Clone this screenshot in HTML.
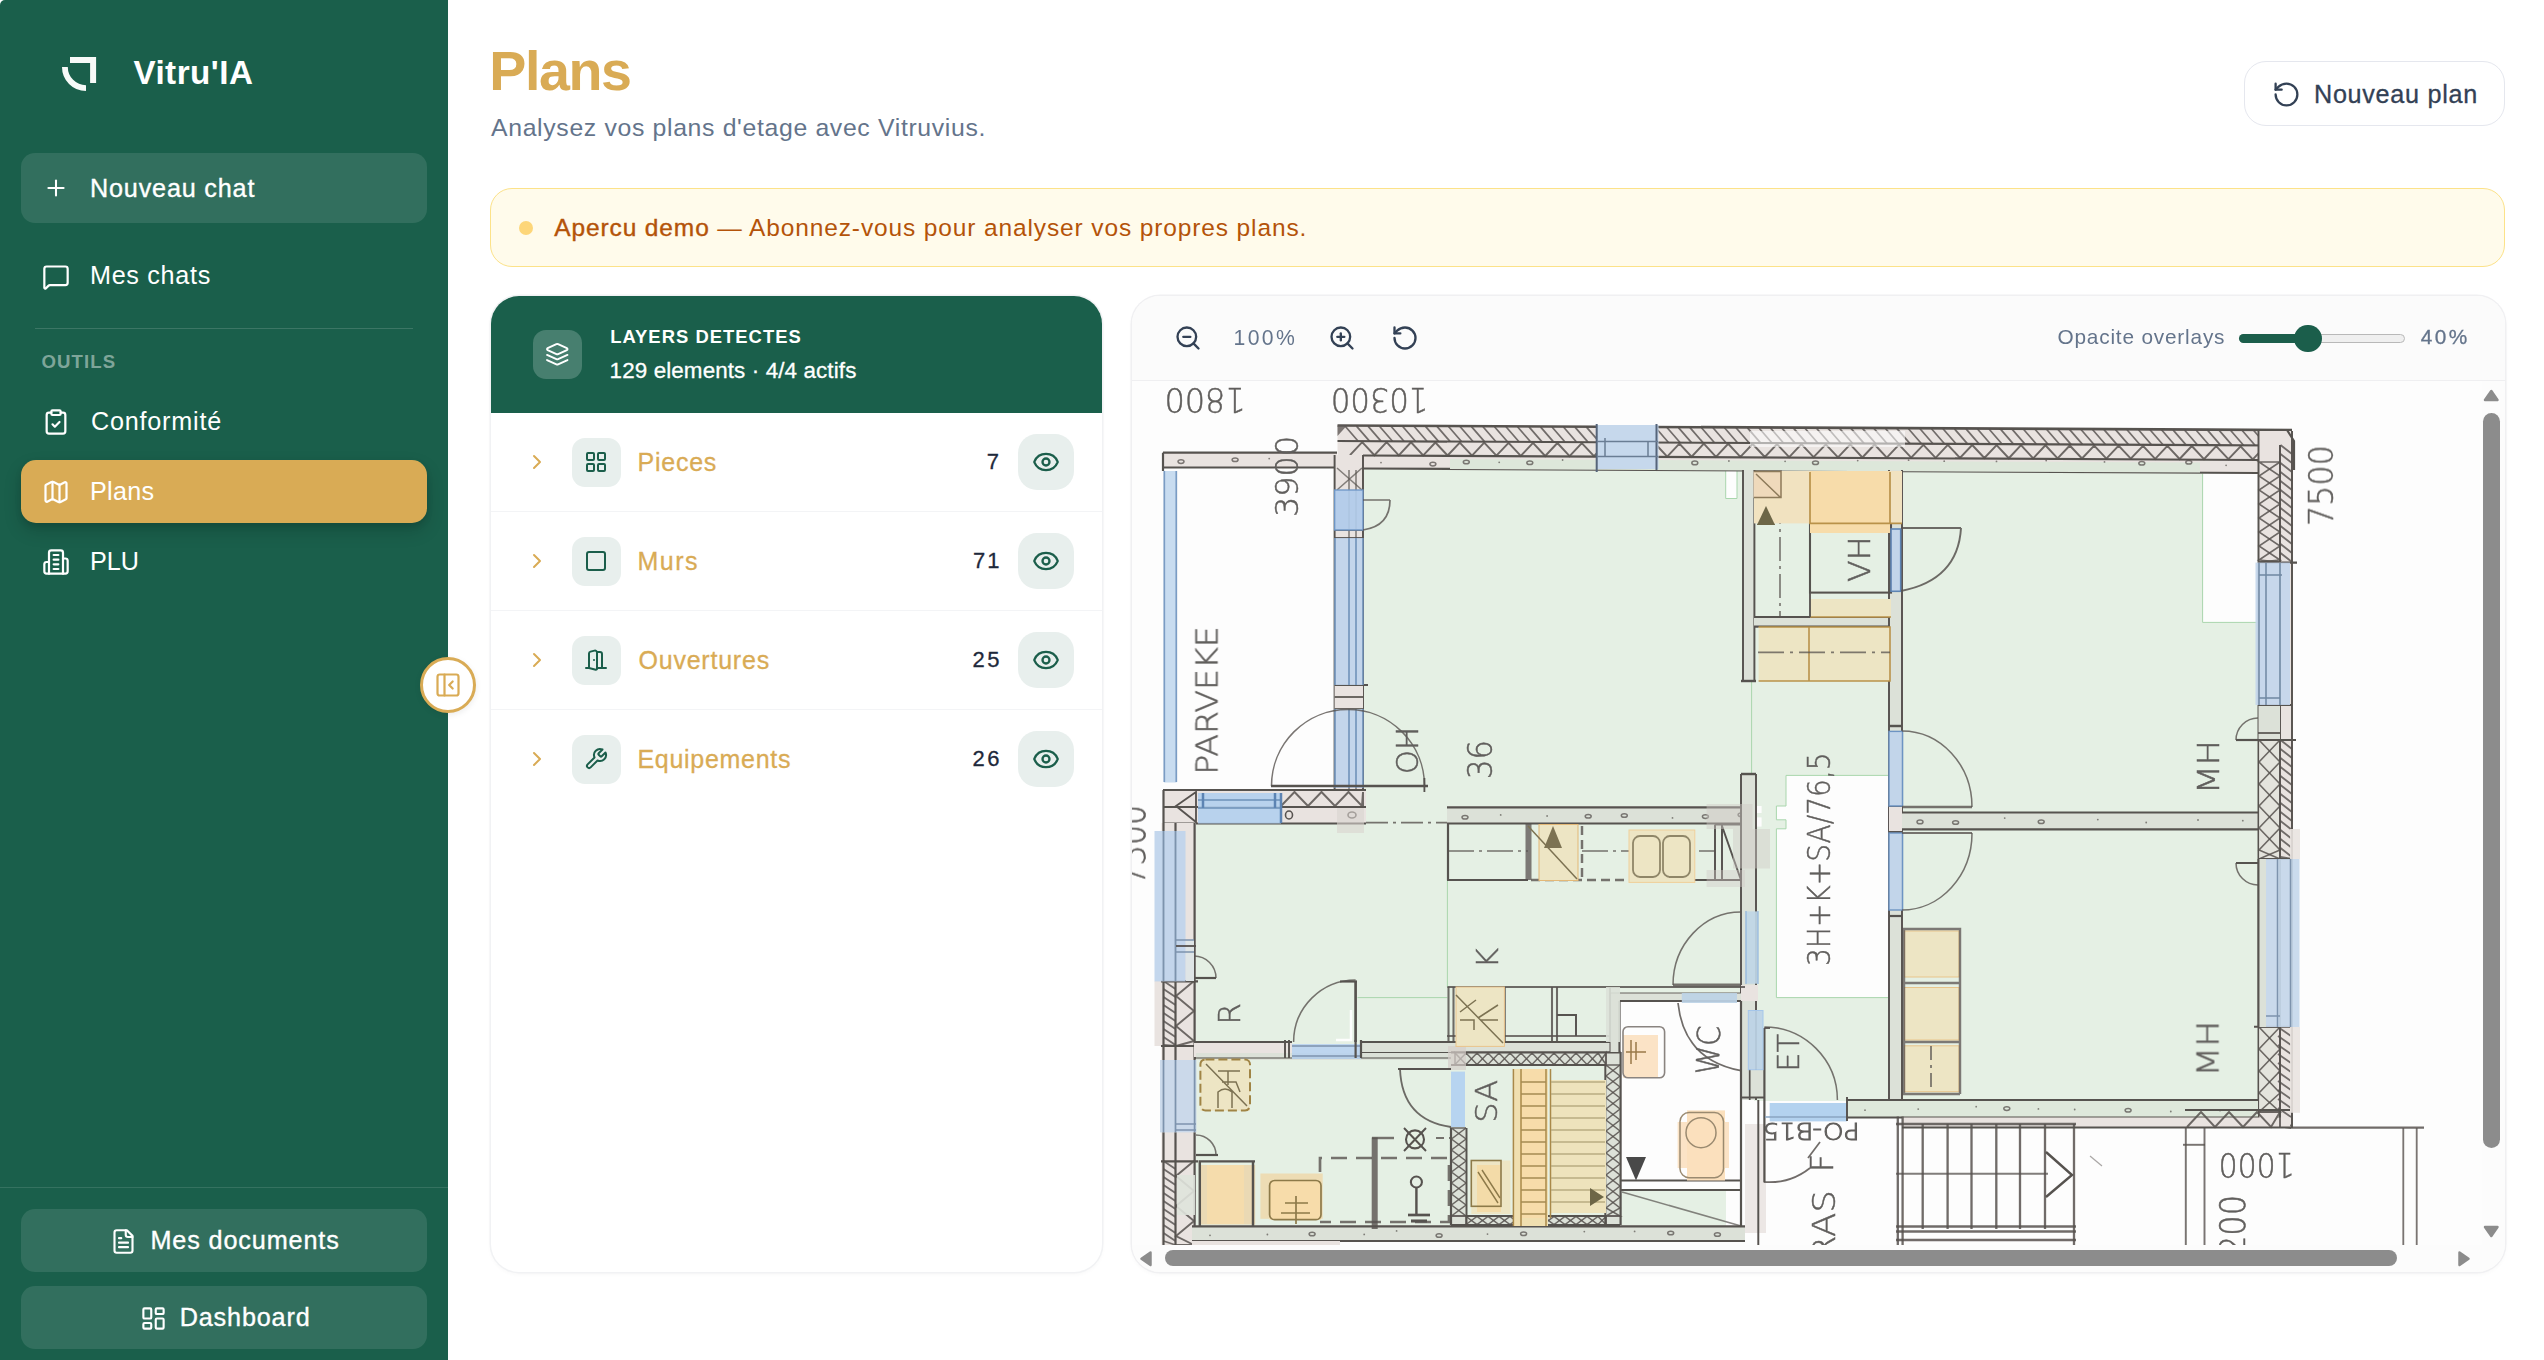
<!DOCTYPE html>
<html lang="fr"><head><meta charset="utf-8"><title>Vitru'IA - Plans</title>
<style>
*{box-sizing:border-box;margin:0;padding:0}
html,body{width:2544px;height:1360px;overflow:hidden;background:#fff}
@media (max-width:1500px){html{zoom:.5}}
body{position:relative;font-family:"Liberation Sans",sans-serif;-webkit-font-smoothing:antialiased}
.abs,.t,.ic,aside,main,section,header,nav,button,div.b{position:absolute}
.t{white-space:pre;display:block}
button{border:0;background:none;font:inherit;color:inherit}
aside{left:0;top:0;width:448px;height:1360px;background:#1a5f4b;border-top-left-radius:5px}
.sbtn{left:21px;width:406px;border-radius:14px;background:rgba(255,255,255,.105)}
.hr{background:rgba(255,255,255,.15);height:1.5px}
.act{left:21px;top:460px;width:406px;height:63px;border-radius:15px;background:#d9ab55;box-shadow:0 8px 18px rgba(0,0,0,.16),0 3px 6px rgba(0,0,0,.10)}
.coll{left:420px;top:657px;width:56px;height:56px;border-radius:50%;background:#fff;border:3px solid #d9ab55;box-shadow:0 2px 6px rgba(0,0,0,.08)}
.np{left:2244px;top:61px;width:261px;height:65px;border-radius:22px;border:1.5px solid #e5e7ee;background:#fff}
.banner{left:490px;top:188px;width:2015px;height:79px;border-radius:22px;border:1.6px solid #fce289;background:#fffbeb}
.dot{left:519px;top:221px;width:14px;height:14px;border-radius:50%;background:#fdd679}
.lp{left:490.5px;top:295.5px;width:611.5px;height:976px;border-radius:28px;background:#fff;box-shadow:0 0 0 1.5px #f1f2f4,0 2px 5px rgba(0,0,0,.04);overflow:hidden}
.lph{left:0;top:0;width:612px;height:117.5px;background:#1a5f4b}
.ibox{width:49px;height:49px;border-radius:13px}
.row{left:0;width:612px;height:99px;border-bottom:1.5px solid #f3f4f6}
.eyeb{width:56px;height:56px;border-radius:19px;background:#e8efed}
.rp{left:1132px;top:295.5px;width:1372.5px;height:976px;border-radius:28px;background:#fcfcfc;box-shadow:0 0 0 1.5px #f0f0f2,0 2px 5px rgba(0,0,0,.04);overflow:hidden}
.tb{left:0;top:0;width:1373px;height:85.5px;border-bottom:1.5px solid #efeff1;background:#fbfbfb}
</style></head><body>

<aside>
<svg class="ic" style="left:56px;top:50px" width="48" height="48" viewBox="56 50 48 48"><path d="M70 60 H93.1 V83" fill="none" stroke="#f7faf8" stroke-width="6"/><path d="M64.9 67 A21.1 21.1 0 0 0 86 88.1" fill="none" stroke="#f7faf8" stroke-width="5.8"/></svg>
<div class="b sbtn" style="top:153px;height:70px"></div>
<svg class="ic" style="left:43px;top:175px" width="26" height="26" viewBox="0 0 24 24" fill="none" stroke="#fff" stroke-width="1.9" stroke-linecap="round" stroke-linejoin="round" ><path d="M5 12h14"/><path d="M12 5v14"/></svg>
<div class="b hr" style="left:35px;top:327.5px;width:378px"></div>
<svg class="ic" style="left:42px;top:262.7px" width="28" height="28" viewBox="0 0 24 24" fill="none" stroke="#fff" stroke-width="1.9" stroke-linecap="round" stroke-linejoin="round" ><path d="M22 17a2 2 0 0 1-2 2H6.828a2 2 0 0 0-1.414.586l-2.202 2.202A.71.71 0 0 1 2 21.286V5a2 2 0 0 1 2-2h16a2 2 0 0 1 2 2z"/></svg>
<svg class="ic" style="left:42px;top:408px" width="28" height="28" viewBox="0 0 24 24" fill="none" stroke="#fff" stroke-width="1.9" stroke-linecap="round" stroke-linejoin="round" ><rect width="8" height="4" x="8" y="2" rx="1" ry="1"/><path d="M16 4h2a2 2 0 0 1 2 2v14a2 2 0 0 1-2 2H6a2 2 0 0 1-2-2V6a2 2 0 0 1 2-2h2"/><path d="m9 14 2 2 4-4"/></svg>
<div class="b act"></div>
<svg class="ic" style="left:42px;top:478px" width="28" height="28" viewBox="0 0 24 24" fill="none" stroke="#fff" stroke-width="1.9" stroke-linecap="round" stroke-linejoin="round" ><path d="M14.106 5.553a2 2 0 0 0 1.788 0l3.659-1.83A1 1 0 0 1 21 4.619v12.764a1 1 0 0 1-.553.894l-4.553 2.277a2 2 0 0 1-1.788 0l-4.212-2.106a2 2 0 0 0-1.788 0l-3.659 1.83A1 1 0 0 1 3 19.381V6.618a1 1 0 0 1 .553-.894l4.553-2.277a2 2 0 0 1 1.788 0z"/><path d="M15 5.764v15"/><path d="M9 3.236v15"/></svg>
<svg class="ic" style="left:42px;top:548px" width="28" height="28" viewBox="0 0 24 24" fill="none" stroke="#fff" stroke-width="1.9" stroke-linecap="round" stroke-linejoin="round" ><path d="M6 22V4a2 2 0 0 1 2-2h8a2 2 0 0 1 2 2v18Z"/><path d="M6 12H4a2 2 0 0 0-2 2v6a2 2 0 0 0 2 2h2"/><path d="M18 9h2a2 2 0 0 1 2 2v9a2 2 0 0 1-2 2h-2"/><path d="M10 6h4"/><path d="M10 10h4"/><path d="M10 14h4"/><path d="M10 18h4"/></svg>
<div class="b hr" style="left:0;top:1186.5px;width:448px;background:rgba(255,255,255,.12)"></div>
<div class="b sbtn" style="top:1209px;height:63px"></div>
<div class="b sbtn" style="top:1286px;height:63px"></div>
<svg class="ic" style="left:109.5px;top:1227.5px" width="27" height="27" viewBox="0 0 24 24" fill="none" stroke="#fff" stroke-width="1.9" stroke-linecap="round" stroke-linejoin="round" ><path d="M15 2H6a2 2 0 0 0-2 2v16a2 2 0 0 0 2 2h12a2 2 0 0 0 2-2V7Z"/><path d="M14 2v4a2 2 0 0 0 2 2h4"/><path d="M10 9H8"/><path d="M16 13H8"/><path d="M16 17H8"/></svg>
<svg class="ic" style="left:139.5px;top:1304.5px" width="27" height="27" viewBox="0 0 24 24" fill="none" stroke="#fff" stroke-width="1.9" stroke-linecap="round" stroke-linejoin="round" ><rect width="7" height="9" x="3" y="3" rx="1"/><rect width="7" height="5" x="14" y="3" rx="1"/><rect width="7" height="9" x="14" y="12" rx="1"/><rect width="7" height="5" x="3" y="16" rx="1"/></svg>
<span class="t" style='left:133.40px;top:55.80px;font:700 33.2px/1 "Liberation Sans", sans-serif;letter-spacing:0.486px;color:#fff;'>Vitru'IA</span>
<span class="t" style='left:90.00px;top:175.87px;font:400 25.2px/1 "Liberation Sans", sans-serif;letter-spacing:0.818px;color:#fff;-webkit-text-stroke:.35px #fff;'>Nouveau chat</span>
<span class="t" style='left:90.00px;top:262.97px;font:400 25.2px/1 "Liberation Sans", sans-serif;letter-spacing:0.688px;color:#fff;'>Mes chats</span>
<span class="t" style='left:41.50px;top:353.46px;font:700 18.6px/1 "Liberation Sans", sans-serif;letter-spacing:1.100px;color:rgba(255,255,255,.45);'>OUTILS</span>
<span class="t" style='left:91.00px;top:408.67px;font:400 25.2px/1 "Liberation Sans", sans-serif;letter-spacing:0.778px;color:#fff;'>Conformité</span>
<span class="t" style='left:90.00px;top:478.67px;font:400 25.2px/1 "Liberation Sans", sans-serif;letter-spacing:0.250px;color:#fff;'>Plans</span>
<span class="t" style='left:90.00px;top:548.67px;font:400 25.2px/1 "Liberation Sans", sans-serif;letter-spacing:0.000px;color:#fff;'>PLU</span>
<span class="t" style='left:150.50px;top:1227.97px;font:400 25.2px/1 "Liberation Sans", sans-serif;letter-spacing:0.875px;color:#fff;-webkit-text-stroke:.35px #fff;'>Mes documents</span>
<span class="t" style='left:179.70px;top:1304.67px;font:400 25.2px/1 "Liberation Sans", sans-serif;letter-spacing:0.850px;color:#fff;-webkit-text-stroke:.35px #fff;'>Dashboard</span>
</aside>
<div class="b coll"></div>
<svg class="ic" style="left:433.9px;top:670.5px" width="28" height="28" viewBox="0 0 24 24" fill="none" stroke="#d9ab55" stroke-width="1.9" stroke-linecap="round" stroke-linejoin="round" ><rect width="18" height="18" x="3" y="3" rx="2"/><path d="M9 3v18"/><path d="m16 15-3-3 3-3"/></svg>
<main>
<div class="b np"></div>
<svg class="ic" style="left:2272.3px;top:79.8px" width="29" height="29" viewBox="0 0 24 24" fill="none" stroke="#334155" stroke-width="1.9" stroke-linecap="round" stroke-linejoin="round" ><path d="M3 12a9 9 0 1 0 9-9 9.75 9.75 0 0 0-6.74 2.74L3 8"/><path d="M3 3v5h5"/></svg>
<div class="b banner"></div><div class="b dot"></div>
<section class="lp"><header class="lph"></header>
<div class="b ibox" style="left:42px;top:34.4px;background:rgba(255,255,255,.2)"></div>
<svg class="ic" style="left:54.2px;top:46.6px" width="24.5" height="24.5" viewBox="0 0 24 24" fill="none" stroke="#fff" stroke-width="1.9" stroke-linecap="round" stroke-linejoin="round" ><path d="m12.83 2.18a2 2 0 0 0-1.66 0L2.6 6.08a1 1 0 0 0 0 1.83l8.58 3.91a2 2 0 0 0 1.66 0l8.58-3.9a1 1 0 0 0 0-1.83Z"/><path d="m22 17.65-9.17 4.16a2 2 0 0 1-1.66 0L2 17.65"/><path d="m22 12.65-9.17 4.16a2 2 0 0 1-1.66 0L2 12.65"/></svg>
<div class="b row" style="top:117.1px"></div>
<svg class="ic" style="left:34.5px;top:154.5px" width="24" height="24" viewBox="0 0 24 24" fill="none" stroke="#d9ab55" stroke-width="2" stroke-linecap="round" stroke-linejoin="round" ><path d="m9 18 6-6-6-6"/></svg>
<div class="b ibox" style="left:81.7px;top:142.4px;background:#e8efed"></div>
<svg class="ic" style="left:93.8px;top:154.8px" width="24" height="24" viewBox="0 0 24 24" fill="none" stroke="#1b5e4b" stroke-width="2" stroke-linecap="round" stroke-linejoin="round" ><rect width="7" height="7" x="3" y="3" rx="1"/><rect width="7" height="7" x="14" y="3" rx="1"/><rect width="7" height="7" x="14" y="14" rx="1"/><rect width="7" height="7" x="3" y="14" rx="1"/></svg>
<div class="b eyeb" style="left:527.5px;top:138.5px"></div>
<svg class="ic" style="left:541.5px;top:152.5px" width="28" height="28" viewBox="0 0 24 24" fill="none" stroke="#1b5e4b" stroke-width="2" stroke-linecap="round" stroke-linejoin="round" ><path d="M2.062 12.348a1 1 0 0 1 0-.696 10.75 10.75 0 0 1 19.876 0 1 1 0 0 1 0 .696 10.75 10.75 0 0 1-19.876 0"/><circle cx="12" cy="12" r="3"/></svg>
<div class="b row" style="top:216.1px"></div>
<svg class="ic" style="left:34.5px;top:253.5px" width="24" height="24" viewBox="0 0 24 24" fill="none" stroke="#d9ab55" stroke-width="2" stroke-linecap="round" stroke-linejoin="round" ><path d="m9 18 6-6-6-6"/></svg>
<div class="b ibox" style="left:81.7px;top:241.4px;background:#e8efed"></div>
<svg class="ic" style="left:93.8px;top:253.8px" width="24" height="24" viewBox="0 0 24 24" fill="none" stroke="#1b5e4b" stroke-width="2" stroke-linecap="round" stroke-linejoin="round" ><rect width="18" height="18" x="3" y="3" rx="2"/></svg>
<div class="b eyeb" style="left:527.5px;top:237.5px"></div>
<svg class="ic" style="left:541.5px;top:251.5px" width="28" height="28" viewBox="0 0 24 24" fill="none" stroke="#1b5e4b" stroke-width="2" stroke-linecap="round" stroke-linejoin="round" ><path d="M2.062 12.348a1 1 0 0 1 0-.696 10.75 10.75 0 0 1 19.876 0 1 1 0 0 1 0 .696 10.75 10.75 0 0 1-19.876 0"/><circle cx="12" cy="12" r="3"/></svg>
<div class="b row" style="top:315.1px"></div>
<svg class="ic" style="left:34.5px;top:352.5px" width="24" height="24" viewBox="0 0 24 24" fill="none" stroke="#d9ab55" stroke-width="2" stroke-linecap="round" stroke-linejoin="round" ><path d="m9 18 6-6-6-6"/></svg>
<div class="b ibox" style="left:81.7px;top:340.4px;background:#e8efed"></div>
<svg class="ic" style="left:93.8px;top:352.8px" width="24" height="24" viewBox="0 0 24 24" fill="none" stroke="#1b5e4b" stroke-width="2" stroke-linecap="round" stroke-linejoin="round" ><path d="M13 4h3a2 2 0 0 1 2 2v14"/><path d="M2 20h3"/><path d="M13 20h9"/><path d="M10 12v.01"/><path d="M13 4.562v16.157a1 1 0 0 1-1.242.97L5 20V5.562a2 2 0 0 1 1.515-1.94l4-1A2 2 0 0 1 13 4.561Z"/></svg>
<div class="b eyeb" style="left:527.5px;top:336.5px"></div>
<svg class="ic" style="left:541.5px;top:350.5px" width="28" height="28" viewBox="0 0 24 24" fill="none" stroke="#1b5e4b" stroke-width="2" stroke-linecap="round" stroke-linejoin="round" ><path d="M2.062 12.348a1 1 0 0 1 0-.696 10.75 10.75 0 0 1 19.876 0 1 1 0 0 1 0 .696 10.75 10.75 0 0 1-19.876 0"/><circle cx="12" cy="12" r="3"/></svg>
<div class="b row" style="top:414.1px;border:0"></div>
<svg class="ic" style="left:34.5px;top:451.5px" width="24" height="24" viewBox="0 0 24 24" fill="none" stroke="#d9ab55" stroke-width="2" stroke-linecap="round" stroke-linejoin="round" ><path d="m9 18 6-6-6-6"/></svg>
<div class="b ibox" style="left:81.7px;top:439.4px;background:#e8efed"></div>
<svg class="ic" style="left:93.8px;top:451.8px" width="24" height="24" viewBox="0 0 24 24" fill="none" stroke="#1b5e4b" stroke-width="2" stroke-linecap="round" stroke-linejoin="round" ><path d="M14.7 6.3a1 1 0 0 0 0 1.4l1.6 1.6a1 1 0 0 0 1.4 0l3.77-3.77a6 6 0 0 1-7.94 7.94l-6.91 6.91a2.12 2.12 0 0 1-3-3l6.91-6.91a6 6 0 0 1 7.94-7.94l-3.76 3.76z"/></svg>
<div class="b eyeb" style="left:527.5px;top:435.5px"></div>
<svg class="ic" style="left:541.5px;top:449.5px" width="28" height="28" viewBox="0 0 24 24" fill="none" stroke="#1b5e4b" stroke-width="2" stroke-linecap="round" stroke-linejoin="round" ><path d="M2.062 12.348a1 1 0 0 1 0-.696 10.75 10.75 0 0 1 19.876 0 1 1 0 0 1 0 .696 10.75 10.75 0 0 1-19.876 0"/><circle cx="12" cy="12" r="3"/></svg>
</section>
<section class="rp"><div class="b tb"></div>
<svg class="abs" style="left:0;top:85.5px" width="1350" height="864" viewBox="1132 381 1350 864" font-family="'DejaVu Sans Light','Liberation Sans',sans-serif" shape-rendering="geometricPrecision">
<defs><filter id="bl" x="0" y="0" width="100%" height="100%" filterUnits="objectBoundingBox"><feGaussianBlur stdDeviation="0.6"/></filter></defs>
<rect x="1132.0" y="381.0" width="1350.0" height="864.0" fill="#fdfdfd" />
<g filter="url(#bl)">
<g fill="#e5f0e4">
<rect x="1363" y="468" width="389" height="355"/>
<rect x="1195" y="823" width="557" height="221"/>
<rect x="1752" y="470" width="138" height="306"/>
<rect x="1754" y="776" width="36" height="222"/>
<rect x="1754" y="998" width="136" height="103"/>
<rect x="1902" y="471" width="356" height="342"/>
<rect x="1902" y="829" width="356" height="272"/>
<rect x="1196" y="1058" width="256" height="169"/>
<rect x="1452" y="1065" width="154" height="153"/>
<rect x="1621" y="1190" width="105" height="36"/>
<rect x="1847" y="1101" width="411" height="17"/>
<rect x="1192" y="1226" width="553" height="16"/>
</g>
<rect x="1725.7" y="471.0" width="11.3" height="27.5" fill="#fdfdfd" />
<rect x="2202.6" y="473.5" width="55.4" height="148.9" fill="#fdfdfd" />
<polygon points="1786.0,775.4 1888.5,775.4 1888.5,997.6 1776.4,997.6 1776.4,828.8 1786.0,828.8 1786.0,819.8 1776.4,819.8 1776.4,806.0 1786.0,806.0" fill="#fdfdfd"/>
<rect x="1757.0" y="806.0" width="4.6" height="7.0" fill="#fdfdfd" />
<rect x="1757.0" y="817.4" width="4.6" height="9.2" fill="#fdfdfd" />
<rect x="1620.0" y="1001.0" width="121.0" height="189.0" fill="#fdfdfd" />
<path d="M1751.6 681.0L1751.6 774.0" stroke="#a9d6ad" stroke-width="1" fill="none"/>
<path d="M1447.4 880.0L1447.4 987.0" stroke="#a9d6ad" stroke-width="1" fill="none"/>
<path d="M1357.5 997.6L1447.4 997.6" stroke="#a9d6ad" stroke-width="1" fill="none"/>
<path d="M1888.5 775.4H1786V806H1776.4V819.8H1786V828.8H1776.4V997.6H1888.5" stroke="#a9d6ad" stroke-width="1" fill="none"/>
<path d="M2202.6 473.5V622.4H2258" stroke="#a9d6ad" stroke-width="1" fill="none"/>
<path d="M1725.7 471V498.5H1737V471" stroke="#a9d6ad" stroke-width="1" fill="none"/>
<polygon points="1337.5,425.5 2292.0,430.0 2292.0,473.0 1337.5,468.5" fill="#e9e3e0"/>
<path d="M1337.5 425.5L2292.0 430.0" stroke="#57524f" stroke-width="2.68" fill="none"/>
<path d="M1337.5 441.0L2278.0 445.5" stroke="#57524f" stroke-width="2.2" fill="none"/>
<path d="M1363.0 455.5L2258.0 460.0" stroke="#57524f" stroke-width="2.2" fill="none"/>
<path d="M1363.0 468.5L2258.0 473.0" stroke="#57524f" stroke-width="2.2" fill="none"/>
<path d="M1345.0 426.0L1358.0 441.0M1356.5 426.1L1369.5 441.1M1368.0 426.1L1381.0 441.1M1379.5 426.2L1392.5 441.2M1391.0 426.2L1404.0 441.2M1402.5 426.3L1415.5 441.3M1414.0 426.3L1427.0 441.3M1425.5 426.4L1438.5 441.4M1437.0 426.4L1450.0 441.4M1448.5 426.5L1461.5 441.5M1460.0 426.5L1473.0 441.5M1471.5 426.6L1484.5 441.6M1483.0 426.7L1496.0 441.7M1494.5 426.7L1507.5 441.7M1506.0 426.8L1519.0 441.8M1517.5 426.8L1530.5 441.8M1529.0 426.9L1542.0 441.9M1540.5 426.9L1553.5 441.9M1552.0 427.0L1565.0 442.0M1563.5 427.0L1576.5 442.0M1575.0 427.1L1588.0 442.1M1586.5 427.1L1599.5 442.1M1598.0 427.2L1611.0 442.2M1609.5 427.2L1622.5 442.2M1621.0 427.3L1634.0 442.3M1632.5 427.4L1645.5 442.4M1644.0 427.4L1657.0 442.4M1655.5 427.5L1668.5 442.5M1667.0 427.5L1680.0 442.5M1678.5 427.6L1691.5 442.6M1690.0 427.6L1703.0 442.6M1701.5 427.7L1714.5 442.7M1713.0 427.7L1726.0 442.7M1724.5 427.8L1737.5 442.8M1736.0 427.8L1749.0 442.8M1747.5 427.9L1760.5 442.9M1759.0 428.0L1772.0 443.0M1770.5 428.0L1783.5 443.0M1782.0 428.1L1795.0 443.1M1793.5 428.1L1806.5 443.1M1805.0 428.2L1818.0 443.2M1816.5 428.2L1829.5 443.2M1828.0 428.3L1841.0 443.3M1839.5 428.3L1852.5 443.3M1851.0 428.4L1864.0 443.4M1862.5 428.4L1875.5 443.4M1874.0 428.5L1887.0 443.5M1885.5 428.5L1898.5 443.5M1897.0 428.6L1910.0 443.6M1908.5 428.7L1921.5 443.7M1920.0 428.7L1933.0 443.7M1931.5 428.8L1944.5 443.8M1943.0 428.8L1956.0 443.8M1954.5 428.9L1967.5 443.9M1966.0 428.9L1979.0 443.9M1977.5 429.0L1990.5 444.0M1989.0 429.0L2002.0 444.0M2000.5 429.1L2013.5 444.1M2012.0 429.1L2025.0 444.1M2023.5 429.2L2036.5 444.2M2035.0 429.3L2048.0 444.3M2046.5 429.3L2059.5 444.3M2058.0 429.4L2071.0 444.4M2069.5 429.4L2082.5 444.4M2081.0 429.5L2094.0 444.5M2092.5 429.5L2105.5 444.5M2104.0 429.6L2117.0 444.6M2115.5 429.6L2128.5 444.6M2127.0 429.7L2140.0 444.7M2138.5 429.7L2151.5 444.7M2150.0 429.8L2163.0 444.8M2161.5 429.8L2174.5 444.8M2173.0 429.9L2186.0 444.9M2184.5 430.0L2197.5 445.0M2196.0 430.0L2209.0 445.0M2207.5 430.1L2220.5 445.1M2219.0 430.1L2232.0 445.1M2230.5 430.2L2243.5 445.2M2242.0 430.2L2255.0 445.2M2253.5 430.3L2266.5 445.3M2265.0 430.3L2278.0 445.3M2276.5 430.4L2282.0 445.4" stroke="#57524f" stroke-width="1.71" fill="none" opacity="0.82"/>
<path d="M1350.0 455.1 L1362.2 442.1 L1374.4 455.2 L1386.6 442.2 L1398.8 455.3 L1411.0 442.3 L1423.2 455.4 L1435.4 442.5 L1447.6 455.5 L1459.8 442.6 L1472.0 455.6 L1484.2 442.7 L1496.4 455.7 L1508.6 442.8 L1520.8 455.9 L1533.0 442.9 L1545.2 456.0 L1557.4 443.0 L1569.6 456.1 L1581.8 443.2 L1594.0 456.2 L1606.2 443.3 L1618.4 456.3 L1630.6 443.4 L1642.8 456.4 L1655.0 443.5 L1667.2 456.6 L1679.4 443.6 L1691.6 456.7 L1703.8 443.7 L1716.0 456.8 L1728.2 443.8 L1740.4 456.9 L1752.6 444.0 L1764.8 457.0 L1777.0 444.1 L1789.2 457.1 L1801.4 444.2 L1813.6 457.2 L1825.8 444.3 L1838.0 457.4 L1850.2 444.4 L1862.4 457.5 L1874.6 444.5 L1886.8 457.6 L1899.0 444.6 L1911.2 457.7 L1923.4 444.8 L1935.6 457.8 L1947.8 444.9 L1960.0 457.9 L1972.2 445.0 L1984.4 458.0 L1996.6 445.1 L2008.8 458.2 L2021.0 445.2 L2033.2 458.3 L2045.4 445.3 L2057.6 458.4 L2069.8 445.5 L2082.0 458.5 L2094.2 445.6 L2106.4 458.6 L2118.6 445.7 L2130.8 458.7 L2143.0 445.8 L2155.2 458.9 L2167.4 445.9 L2179.6 459.0 L2191.8 446.0 L2204.0 459.1 L2216.2 446.1 L2228.4 459.2 L2240.6 446.3 L2252.8 459.3 L2265.0 446.4 L2277.2 459.4" stroke="#57524f" stroke-width="1.95" fill="none" opacity="0.85"/>
<polygon points="1450.0,459.0 2200.0,462.6 2200.0,472.6 1450.0,469.0" fill="#dde7da"/>
<rect x="1363.0" y="456.5" width="895.0" height="12.0" fill="none" />
<circle cx="1381.0" cy="462.6" r="0.9" fill="#57524f" opacity=".7"/>
<ellipse cx="1432.9" cy="464.1" rx="3" ry="1.8" fill="none" stroke="#57524f" stroke-width="1.5" opacity=".75"/>
<ellipse cx="1466.3" cy="462.0" rx="3" ry="1.8" fill="none" stroke="#57524f" stroke-width="1.5" opacity=".75"/>
<circle cx="1499.2" cy="462.3" r="0.9" fill="#57524f" opacity=".7"/>
<ellipse cx="1529.8" cy="462.7" rx="3" ry="1.8" fill="none" stroke="#57524f" stroke-width="1.5" opacity=".75"/>
<circle cx="1562.6" cy="460.0" r="0.9" fill="#57524f" opacity=".7"/>
<circle cx="1618.7" cy="462.4" r="0.9" fill="#57524f" opacity=".7"/>
<circle cx="1650.5" cy="460.6" r="0.9" fill="#57524f" opacity=".7"/>
<ellipse cx="1694.8" cy="462.9" rx="3" ry="1.8" fill="none" stroke="#57524f" stroke-width="1.5" opacity=".75"/>
<circle cx="1728.9" cy="461.0" r="0.9" fill="#57524f" opacity=".7"/>
<circle cx="1785.1" cy="461.3" r="0.9" fill="#57524f" opacity=".7"/>
<ellipse cx="1815.5" cy="462.7" rx="3" ry="1.8" fill="none" stroke="#57524f" stroke-width="1.5" opacity=".75"/>
<circle cx="1857.7" cy="460.6" r="0.9" fill="#57524f" opacity=".7"/>
<circle cx="1908.6" cy="460.2" r="0.9" fill="#57524f" opacity=".7"/>
<circle cx="1944.2" cy="461.2" r="0.9" fill="#57524f" opacity=".7"/>
<circle cx="1996.5" cy="461.4" r="0.9" fill="#57524f" opacity=".7"/>
<circle cx="2046.2" cy="460.5" r="0.9" fill="#57524f" opacity=".7"/>
<circle cx="2104.5" cy="461.9" r="0.9" fill="#57524f" opacity=".7"/>
<ellipse cx="2141.8" cy="463.3" rx="3" ry="1.8" fill="none" stroke="#57524f" stroke-width="1.5" opacity=".75"/>
<ellipse cx="2188.8" cy="462.2" rx="3" ry="1.8" fill="none" stroke="#57524f" stroke-width="1.5" opacity=".75"/>
<circle cx="2226.1" cy="465.3" r="0.9" fill="#57524f" opacity=".7"/>
<rect x="1750.0" y="431.0" width="155.0" height="16.0" fill="#fff" opacity="0.55" />
<polygon points="1337.5,425.5 1347.0,425.5 1337.5,436.0" fill="#5f5a57" opacity="0.8"/>
<rect x="1163.0" y="452.7" width="174.0" height="14.8" fill="#e9e3e0" />
<path d="M1163.0 452.7L1337.0 452.7" stroke="#57524f" stroke-width="2.2" fill="none"/>
<path d="M1163.0 467.5L1337.0 467.5" stroke="#57524f" stroke-width="2.2" fill="none"/>
<ellipse cx="1181.0" cy="461.6" rx="3" ry="1.8" fill="none" stroke="#57524f" stroke-width="1.5" opacity=".75"/>
<ellipse cx="1235.1" cy="459.7" rx="3" ry="1.8" fill="none" stroke="#57524f" stroke-width="1.5" opacity=".75"/>
<circle cx="1269.2" cy="458.6" r="0.9" fill="#57524f" opacity=".7"/>
<path d="M1163.0 452.7L1163.0 471.0" stroke="#57524f" stroke-width="2.2" fill="none"/>
<rect x="1334.6" y="455.0" width="28.4" height="335.0" fill="#e9e3e0" />
<path d="M1334.6 455.0L1334.6 790.0" stroke="#57524f" stroke-width="1.95" fill="none"/>
<path d="M1363.0 455.0L1363.0 790.0" stroke="#57524f" stroke-width="1.95" fill="none"/>
<path d="M1349.0 470.0L1349.0 790.0" stroke="#57524f" stroke-width="1.59" fill="none" opacity="0.7"/>
<path d="M1356.0 470.0L1356.0 790.0" stroke="#57524f" stroke-width="1.59" fill="none" opacity="0.7"/>
<path d="M1337 468L1362 490M1362 468L1337 490" stroke="#57524f" stroke-width="1.59" fill="none" opacity="0.7"/>
<rect x="1334.6" y="685.0" width="28.4" height="24.0" fill="#e9e3e0" />
<path d="M1334.6 685.0L1368.0 685.0" stroke="#57524f" stroke-width="2.2" fill="none"/>
<path d="M1334.6 697.0L1363.0 697.0" stroke="#57524f" stroke-width="1.71" fill="none"/>
<path d="M1334.6 709.0L1363.0 709.0" stroke="#57524f" stroke-width="1.71" fill="none"/>
<path d="M1334.6 530.0L1363.0 530.0" stroke="#57524f" stroke-width="1.83" fill="none"/>
<path d="M1334.6 538.0L1363.0 538.0" stroke="#57524f" stroke-width="1.83" fill="none"/>
<rect x="1163.0" y="790.0" width="203.0" height="33.5" fill="#e9e3e0" />
<path d="M1163.0 790.0L1366.0 790.0" stroke="#57524f" stroke-width="2.2" fill="none"/>
<path d="M1163.0 823.5L1366.0 823.5" stroke="#57524f" stroke-width="2.2" fill="none"/>
<path d="M1163.0 807.0L1366.0 807.0" stroke="#57524f" stroke-width="1.83" fill="none"/>
<path d="M1281.0 806.0 L1294.5 792.0 L1308.0 806.0 L1321.5 792.0 L1335.0 806.0 L1348.5 792.0 L1362.0 806.0 L1363.0 792.0 L1363.0 806.0" stroke="#57524f" stroke-width="1.95" fill="none" opacity="0.85"/>
<path d="M1176 806L1196 792V822Z" stroke="#57524f" stroke-width="1.83" fill="none"/>
<ellipse cx="1289" cy="815" rx="3.5" ry="4" fill="none" stroke="#57524f" stroke-width="1.6"/><ellipse cx="1352" cy="815" rx="4" ry="3" fill="none" stroke="#57524f" stroke-width="1.6"/>
<rect x="1337.0" y="808.0" width="27.0" height="25.0" fill="#d9d3cf" opacity="0.6" />
<rect x="1161.5" y="823.0" width="34.5" height="422.0" fill="#e9e3e0" />
<rect x="1154.5" y="981.0" width="8.5" height="65.0" fill="#e9e3e0" />
<path d="M1163.5 790.0L1163.5 1245.0" stroke="#57524f" stroke-width="2.2" fill="none"/>
<path d="M1175.5 823.0L1175.5 1245.0" stroke="#57524f" stroke-width="2.2" fill="none"/>
<path d="M1194.6 823.0L1194.6 1245.0" stroke="#57524f" stroke-width="2.2" fill="none"/>
<path d="M1163.5 981.0L1175.5 989.0M1163.5 989.0L1175.5 997.0M1163.5 997.0L1175.5 1005.0M1163.5 1005.0L1175.5 1013.0M1163.5 1013.0L1175.5 1021.0M1163.5 1021.0L1175.5 1029.0M1163.5 1029.0L1175.5 1037.0M1163.5 1037.0L1175.5 1045.0M1163.5 1045.0L1175.5 1046.0" stroke="#57524f" stroke-width="1.83" fill="none" opacity="0.82"/>
<path d="M1194.0 981.0 L1176.0 996.0 L1194.0 1011.0 L1176.0 1026.0 L1194.0 1041.0 L1176.0 1046.0 L1194.0 1046.0" stroke="#57524f" stroke-width="1.95" fill="none" opacity="0.85"/>
<path d="M1161.0 981.4L1198.0 981.4" stroke="#57524f" stroke-width="2.2" fill="none"/>
<path d="M1161.0 1046.0L1198.0 1046.0" stroke="#57524f" stroke-width="1.95" fill="none"/>
<path d="M1163.5 1161.0L1175.5 1169.0M1163.5 1169.0L1175.5 1177.0M1163.5 1177.0L1175.5 1185.0M1163.5 1185.0L1175.5 1193.0M1163.5 1193.0L1175.5 1201.0M1163.5 1201.0L1175.5 1209.0M1163.5 1209.0L1175.5 1217.0M1163.5 1217.0L1175.5 1225.0M1163.5 1225.0L1175.5 1233.0M1163.5 1233.0L1175.5 1241.0M1163.5 1241.0L1175.5 1245.0" stroke="#57524f" stroke-width="1.83" fill="none" opacity="0.82"/>
<path d="M1194.0 1161.0 L1176.0 1176.0 L1194.0 1191.0 L1176.0 1206.0 L1194.0 1221.0 L1176.0 1236.0 L1194.0 1245.0 L1176.0 1245.0" stroke="#57524f" stroke-width="1.95" fill="none" opacity="0.85"/>
<path d="M1161.0 1161.4L1198.0 1161.4" stroke="#57524f" stroke-width="2.2" fill="none"/>
<rect x="1177.0" y="1175.0" width="18.0" height="40.0" fill="#dfe3dc" opacity="0.9" />
<rect x="1194.0" y="1042.0" width="98.0" height="16.0" fill="#e9e3e0" />
<path d="M1194.0 1042.0L1292.0 1042.0" stroke="#57524f" stroke-width="2.2" fill="none"/>
<path d="M1194.0 1058.0L1292.0 1058.0" stroke="#57524f" stroke-width="2.2" fill="none"/>
<rect x="1361.0" y="1042.0" width="259.0" height="11.0" fill="#dce1d8" />
<path d="M1361.0 1042.0L1620.0 1042.0" stroke="#57524f" stroke-width="2.2" fill="none"/>
<path d="M1361.0 1053.0L1620.0 1053.0" stroke="#57524f" stroke-width="2.2" fill="none"/>
<rect x="1196.0" y="1053.0" width="256.0" height="7.0" fill="#dce1d8" />
<path d="M1194.0 1058.0L1452.0 1058.0" stroke="#57524f" stroke-width="1.71" fill="none" opacity="0.7"/>
<path d="M1285.0 1040.0L1285.0 1058.0" stroke="#57524f" stroke-width="1.95" fill="none"/>
<path d="M1289.0 1040.0L1289.0 1058.0" stroke="#57524f" stroke-width="1.95" fill="none"/>
<rect x="1447.0" y="807.3" width="305.0" height="16.2" fill="#dce1d8" />
<path d="M1447.0 807.3L1752.0 807.3" stroke="#57524f" stroke-width="2.2" fill="none"/>
<path d="M1447.0 823.5L1752.0 823.5" stroke="#57524f" stroke-width="2.2" fill="none"/>
<ellipse cx="1465.0" cy="817.3" rx="3" ry="1.8" fill="none" stroke="#57524f" stroke-width="1.5" opacity=".75"/>
<circle cx="1500.7" cy="814.9" r="0.9" fill="#57524f" opacity=".7"/>
<circle cx="1547.1" cy="816.0" r="0.9" fill="#57524f" opacity=".7"/>
<ellipse cx="1588.2" cy="816.2" rx="3" ry="1.8" fill="none" stroke="#57524f" stroke-width="1.5" opacity=".75"/>
<ellipse cx="1624.3" cy="815.5" rx="3" ry="1.8" fill="none" stroke="#57524f" stroke-width="1.5" opacity=".75"/>
<circle cx="1672.5" cy="817.9" r="0.9" fill="#57524f" opacity=".7"/>
<ellipse cx="1705.4" cy="816.6" rx="3" ry="1.8" fill="none" stroke="#57524f" stroke-width="1.5" opacity=".75"/>
<ellipse cx="1741.1" cy="814.7" rx="3" ry="1.8" fill="none" stroke="#57524f" stroke-width="1.5" opacity=".75"/>
<path d="M1366.0 822.6L1447.0 822.6" stroke="#57524f" stroke-width="1.71" fill="none" stroke-dasharray="22 5 3 5" opacity="0.8"/>
<rect x="1741.0" y="774.0" width="15.0" height="326.0" fill="#dce1d8" />
<path d="M1741.0 774.0L1741.0 1100.0" stroke="#57524f" stroke-width="1.95" fill="none"/>
<path d="M1756.0 774.0L1756.0 1100.0" stroke="#57524f" stroke-width="1.95" fill="none"/>
<path d="M1741.0 774.0L1756.0 774.0" stroke="#57524f" stroke-width="2.44" fill="none"/>
<rect x="1741.0" y="985.0" width="17.0" height="16.0" fill="#e9e3e0" />
<rect x="1743.0" y="470.0" width="11.4" height="211.0" fill="#dce1d8" />
<path d="M1743.0 470.0L1743.0 681.0" stroke="#57524f" stroke-width="1.95" fill="none"/>
<path d="M1754.4 470.0L1754.4 681.0" stroke="#57524f" stroke-width="1.95" fill="none"/>
<path d="M1741.0 681.0L1756.0 681.0" stroke="#57524f" stroke-width="2.44" fill="none"/>
<rect x="1754.0" y="617.0" width="147.0" height="9.6" fill="#dce1d8" />
<path d="M1754.0 617.0L1901.0 617.0" stroke="#57524f" stroke-width="2.2" fill="none"/>
<path d="M1754.0 626.6L1901.0 626.6" stroke="#57524f" stroke-width="2.2" fill="none"/>
<rect x="1889.0" y="470.0" width="13.0" height="630.0" fill="#dce1d8" />
<path d="M1889.0 470.0L1889.0 1100.0" stroke="#57524f" stroke-width="1.95" fill="none"/>
<path d="M1902.0 470.0L1902.0 1100.0" stroke="#57524f" stroke-width="1.95" fill="none"/>
<rect x="1889.0" y="806.0" width="13.0" height="26.0" fill="#e9e3e0" />
<path d="M1889.0 806.0L1902.0 806.0" stroke="#57524f" stroke-width="1.95" fill="none"/>
<path d="M1889.0 832.0L1902.0 832.0" stroke="#57524f" stroke-width="1.95" fill="none"/>
<path d="M1889.0 726.0L1902.0 726.0" stroke="#57524f" stroke-width="2.44" fill="none"/>
<path d="M1889.0 916.0L1902.0 916.0" stroke="#57524f" stroke-width="2.2" fill="none"/>
<rect x="1902.0" y="812.5" width="356.0" height="16.8" fill="#dce1d8" />
<path d="M1902.0 812.5L2258.0 812.5" stroke="#57524f" stroke-width="2.2" fill="none"/>
<path d="M1902.0 829.3L2258.0 829.3" stroke="#57524f" stroke-width="2.2" fill="none"/>
<ellipse cx="1920.0" cy="821.9" rx="3" ry="1.8" fill="none" stroke="#57524f" stroke-width="1.5" opacity=".75"/>
<ellipse cx="1955.6" cy="822.5" rx="3" ry="1.8" fill="none" stroke="#57524f" stroke-width="1.5" opacity=".75"/>
<circle cx="2004.7" cy="818.1" r="0.9" fill="#57524f" opacity=".7"/>
<ellipse cx="2041.2" cy="821.7" rx="3" ry="1.8" fill="none" stroke="#57524f" stroke-width="1.5" opacity=".75"/>
<circle cx="2097.8" cy="819.6" r="0.9" fill="#57524f" opacity=".7"/>
<circle cx="2146.2" cy="822.5" r="0.9" fill="#57524f" opacity=".7"/>
<circle cx="2198.0" cy="820.0" r="0.9" fill="#57524f" opacity=".7"/>
<circle cx="2242.8" cy="820.7" r="0.9" fill="#57524f" opacity=".7"/>
<rect x="2258.5" y="431.0" width="33.5" height="697.0" fill="#e9e3e0" />
<path d="M2258.5 431.0L2258.5 1128.0" stroke="#57524f" stroke-width="1.95" fill="none"/>
<path d="M2292.0 431.0L2292.0 1128.0" stroke="#57524f" stroke-width="1.95" fill="none"/>
<path d="M2280.0 445.0L2280.0 1128.0" stroke="#57524f" stroke-width="1.95" fill="none"/>
<path d="M2280.0 462.0 L2259.0 476.0 L2280.0 490.0 L2259.0 504.0 L2280.0 518.0 L2259.0 532.0 L2280.0 546.0 L2259.0 560.0 L2280.0 562.0 L2259.0 562.0" stroke="#57524f" stroke-width="1.59" fill="none" opacity="0.85"/>
<path d="M2280.0 462.0 L2259.0 462.0 L2280.0 476.0 L2259.0 490.0 L2280.0 504.0 L2259.0 518.0 L2280.0 532.0 L2259.0 546.0 L2280.0 560.0 L2259.0 562.0 L2280.0 562.0" stroke="#57524f" stroke-width="1.59" fill="none" opacity="0.85"/>
<path d="M2280.5 445.0L2292.0 454.0M2280.5 454.0L2292.0 463.0M2280.5 463.0L2292.0 472.0M2280.5 472.0L2292.0 481.0M2280.5 481.0L2292.0 490.0M2280.5 490.0L2292.0 499.0M2280.5 499.0L2292.0 508.0M2280.5 508.0L2292.0 517.0M2280.5 517.0L2292.0 526.0M2280.5 526.0L2292.0 535.0M2280.5 535.0L2292.0 544.0M2280.5 544.0L2292.0 553.0M2280.5 553.0L2292.0 562.0" stroke="#57524f" stroke-width="1.83" fill="none" opacity="0.82"/>
<rect x="2259.0" y="740.0" width="20.0" height="119.0" fill="#e2e4dc" opacity="0.8" />
<path d="M2280.0 740.0 L2259.0 762.0 L2280.0 784.0 L2259.0 806.0 L2280.0 828.0 L2259.0 850.0 L2280.0 859.0 L2259.0 859.0" stroke="#57524f" stroke-width="1.59" fill="none" opacity="0.85"/>
<path d="M2280.0 740.0 L2259.0 740.0 L2280.0 762.0 L2259.0 784.0 L2280.0 806.0 L2259.0 828.0 L2280.0 850.0 L2259.0 859.0 L2280.0 859.0" stroke="#57524f" stroke-width="1.59" fill="none" opacity="0.85"/>
<path d="M2280.5 740.0L2292.0 749.0M2280.5 749.0L2292.0 758.0M2280.5 758.0L2292.0 767.0M2280.5 767.0L2292.0 776.0M2280.5 776.0L2292.0 785.0M2280.5 785.0L2292.0 794.0M2280.5 794.0L2292.0 803.0M2280.5 803.0L2292.0 812.0M2280.5 812.0L2292.0 821.0M2280.5 821.0L2292.0 830.0M2280.5 830.0L2292.0 839.0M2280.5 839.0L2292.0 848.0M2280.5 848.0L2292.0 857.0M2280.5 857.0L2292.0 859.0" stroke="#57524f" stroke-width="1.83" fill="none" opacity="0.82"/>
<rect x="2259.0" y="1027.0" width="18.0" height="85.0" fill="#e2e4dc" opacity="0.8" />
<path d="M2280.0 1027.0 L2259.0 1049.0 L2280.0 1071.0 L2259.0 1093.0 L2280.0 1112.0 L2259.0 1112.0" stroke="#57524f" stroke-width="1.59" fill="none" opacity="0.85"/>
<path d="M2280.0 1027.0 L2259.0 1027.0 L2280.0 1049.0 L2259.0 1071.0 L2280.0 1093.0 L2259.0 1112.0 L2280.0 1112.0" stroke="#57524f" stroke-width="1.59" fill="none" opacity="0.85"/>
<path d="M2278.0 1027.0L2291.0 1036.0M2278.0 1036.0L2291.0 1045.0M2278.0 1045.0L2291.0 1054.0M2278.0 1054.0L2291.0 1063.0M2278.0 1063.0L2291.0 1072.0M2278.0 1072.0L2291.0 1081.0M2278.0 1081.0L2291.0 1090.0M2278.0 1090.0L2291.0 1099.0M2278.0 1099.0L2291.0 1108.0M2278.0 1108.0L2291.0 1117.0M2278.0 1117.0L2291.0 1126.0M2278.0 1126.0L2291.0 1128.0" stroke="#57524f" stroke-width="1.83" fill="none" opacity="0.82"/>
<rect x="2258.5" y="705.0" width="21.5" height="35.0" fill="#dce1d8" />
<path d="M2258.0 705.0L2292.0 705.0" stroke="#57524f" stroke-width="2.2" fill="none"/>
<path d="M2258.0 740.0L2296.0 740.0" stroke="#57524f" stroke-width="2.2" fill="none"/>
<path d="M2258.0 733.0L2280.0 733.0" stroke="#57524f" stroke-width="1.71" fill="none"/>
<path d="M2258.0 562.6L2297.0 562.6" stroke="#57524f" stroke-width="2.2" fill="none"/>
<path d="M2254.0 1026.7L2292.0 1026.7" stroke="#57524f" stroke-width="1.95" fill="none"/>
<path d="M2258.0 859.0L2292.0 859.0" stroke="#57524f" stroke-width="1.95" fill="none"/>
<rect x="2290.0" y="1027.0" width="10.0" height="85.8" fill="#e9e3e0" opacity="0.9" />
<rect x="2290.0" y="829.0" width="10.0" height="30.0" fill="#e9e3e0" opacity="0.9" />
<path d="M2275 430H2287L2294 441V470" stroke="#57524f" stroke-width="2.2" fill="none"/>
<rect x="1847.0" y="1100.0" width="411.0" height="17.5" fill="#dee8db" />
<path d="M1847.0 1100.0L2258.0 1100.0" stroke="#57524f" stroke-width="2.2" fill="none"/>
<path d="M1847.0 1117.5L2258.0 1117.5" stroke="#57524f" stroke-width="2.2" fill="none"/>
<circle cx="1865.0" cy="1110.2" r="0.9" fill="#57524f" opacity=".7"/>
<circle cx="1918.2" cy="1109.1" r="0.9" fill="#57524f" opacity=".7"/>
<circle cx="1976.2" cy="1106.7" r="0.9" fill="#57524f" opacity=".7"/>
<ellipse cx="2006.8" cy="1108.6" rx="3" ry="1.8" fill="none" stroke="#57524f" stroke-width="1.5" opacity=".75"/>
<circle cx="2038.4" cy="1108.9" r="0.9" fill="#57524f" opacity=".7"/>
<circle cx="2074.7" cy="1109.5" r="0.9" fill="#57524f" opacity=".7"/>
<ellipse cx="2128.1" cy="1110.2" rx="3" ry="1.8" fill="none" stroke="#57524f" stroke-width="1.5" opacity=".75"/>
<circle cx="2170.8" cy="1111.5" r="0.9" fill="#57524f" opacity=".7"/>
<circle cx="2220.0" cy="1110.5" r="0.9" fill="#57524f" opacity=".7"/>
<rect x="1902.0" y="1117.5" width="388.0" height="10.5" fill="#e9e3e0" />
<path d="M1902.0 1127.5L2290.0 1127.5" stroke="#57524f" stroke-width="1.95" fill="none"/>
<path d="M2187.0 1127.0 L2201.0 1112.0 L2215.0 1127.0 L2229.0 1112.0 L2243.0 1127.0 L2257.0 1112.0 L2271.0 1127.0 L2280.0 1112.0 L2280.0 1127.0" stroke="#57524f" stroke-width="1.95" fill="none" opacity="0.85"/>
<path d="M2185.0 1110.0L2290.0 1110.0" stroke="#57524f" stroke-width="1.95" fill="none"/>
<rect x="1192.0" y="1226.4" width="553.0" height="14.6" fill="#dce1d8" />
<path d="M1192.0 1226.4L1745.0 1226.4" stroke="#57524f" stroke-width="2.2" fill="none"/>
<path d="M1192.0 1241.0L1745.0 1241.0" stroke="#57524f" stroke-width="2.2" fill="none"/>
<circle cx="1210.0" cy="1235.3" r="0.9" fill="#57524f" opacity=".7"/>
<circle cx="1267.4" cy="1234.5" r="0.9" fill="#57524f" opacity=".7"/>
<ellipse cx="1312.1" cy="1234.0" rx="3" ry="1.8" fill="none" stroke="#57524f" stroke-width="1.5" opacity=".75"/>
<circle cx="1364.2" cy="1234.4" r="0.9" fill="#57524f" opacity=".7"/>
<circle cx="1396.6" cy="1230.9" r="0.9" fill="#57524f" opacity=".7"/>
<ellipse cx="1439.1" cy="1235.5" rx="3" ry="1.8" fill="none" stroke="#57524f" stroke-width="1.5" opacity=".75"/>
<circle cx="1487.5" cy="1234.1" r="0.9" fill="#57524f" opacity=".7"/>
<ellipse cx="1523.6" cy="1233.7" rx="3" ry="1.8" fill="none" stroke="#57524f" stroke-width="1.5" opacity=".75"/>
<circle cx="1584.3" cy="1231.6" r="0.9" fill="#57524f" opacity=".7"/>
<circle cx="1634.6" cy="1231.4" r="0.9" fill="#57524f" opacity=".7"/>
<ellipse cx="1670.7" cy="1233.0" rx="3" ry="1.8" fill="none" stroke="#57524f" stroke-width="1.5" opacity=".75"/>
<ellipse cx="1717.4" cy="1234.5" rx="3" ry="1.8" fill="none" stroke="#57524f" stroke-width="1.5" opacity=".75"/>
<rect x="1192.0" y="1241.0" width="148.0" height="4.0" fill="#e9e3e0" />
<rect x="1451.0" y="1128.0" width="15.5" height="97.0" fill="#dce1d8" />
<rect x="1451.0" y="1052.4" width="169.6" height="12.6" fill="#dce1d8" />
<rect x="1605.3" y="1052.4" width="15.3" height="172.6" fill="#dce1d8" />
<rect x="1466.0" y="1216.0" width="154.0" height="9.0" fill="#dce1d8" />
<path d="M1451.0 1052.4L1620.6 1052.4" stroke="#57524f" stroke-width="2.2" fill="none"/>
<path d="M1451.0 1065.0L1606.0 1065.0" stroke="#57524f" stroke-width="1.95" fill="none"/>
<path d="M1455.0 1064.5 L1466.0 1053.0 L1477.0 1064.5 L1488.0 1053.0 L1499.0 1064.5 L1510.0 1053.0 L1521.0 1064.5 L1532.0 1053.0 L1543.0 1064.5 L1554.0 1053.0 L1565.0 1064.5 L1576.0 1053.0 L1587.0 1064.5 L1598.0 1053.0 L1606.0 1064.5 L1606.0 1053.0" stroke="#57524f" stroke-width="1.52" fill="none" opacity="0.85"/>
<path d="M1455.0 1064.5 L1455.0 1053.0 L1466.0 1064.5 L1477.0 1053.0 L1488.0 1064.5 L1499.0 1053.0 L1510.0 1064.5 L1521.0 1053.0 L1532.0 1064.5 L1543.0 1053.0 L1554.0 1064.5 L1565.0 1053.0 L1576.0 1064.5 L1587.0 1053.0 L1598.0 1064.5 L1606.0 1053.0 L1606.0 1064.5" stroke="#57524f" stroke-width="1.52" fill="none" opacity="0.85"/>
<path d="M1451.0 1128.0L1451.0 1225.0" stroke="#57524f" stroke-width="2.2" fill="none"/>
<path d="M1466.5 1128.0L1466.5 1225.0" stroke="#57524f" stroke-width="1.95" fill="none"/>
<path d="M1466.0 1128.0 L1451.5 1139.0 L1466.0 1150.0 L1451.5 1161.0 L1466.0 1172.0 L1451.5 1183.0 L1466.0 1194.0 L1451.5 1205.0 L1466.0 1216.0 L1451.5 1216.0" stroke="#57524f" stroke-width="1.52" fill="none" opacity="0.85"/>
<path d="M1466.0 1128.0 L1451.5 1128.0 L1466.0 1139.0 L1451.5 1150.0 L1466.0 1161.0 L1451.5 1172.0 L1466.0 1183.0 L1451.5 1194.0 L1466.0 1205.0 L1451.5 1216.0 L1466.0 1216.0" stroke="#57524f" stroke-width="1.52" fill="none" opacity="0.85"/>
<path d="M1605.3 1065.0L1605.3 1225.0" stroke="#57524f" stroke-width="1.95" fill="none"/>
<path d="M1620.6 1052.0L1620.6 1225.0" stroke="#57524f" stroke-width="2.2" fill="none"/>
<path d="M1620.0 1065.0 L1606.0 1076.0 L1620.0 1087.0 L1606.0 1098.0 L1620.0 1109.0 L1606.0 1120.0 L1620.0 1131.0 L1606.0 1142.0 L1620.0 1153.0 L1606.0 1164.0 L1620.0 1175.0 L1606.0 1186.0 L1620.0 1197.0 L1606.0 1208.0 L1620.0 1216.0 L1606.0 1216.0" stroke="#57524f" stroke-width="1.52" fill="none" opacity="0.85"/>
<path d="M1620.0 1065.0 L1606.0 1065.0 L1620.0 1076.0 L1606.0 1087.0 L1620.0 1098.0 L1606.0 1109.0 L1620.0 1120.0 L1606.0 1131.0 L1620.0 1142.0 L1606.0 1153.0 L1620.0 1164.0 L1606.0 1175.0 L1620.0 1186.0 L1606.0 1197.0 L1620.0 1208.0 L1606.0 1216.0 L1620.0 1216.0" stroke="#57524f" stroke-width="1.52" fill="none" opacity="0.85"/>
<path d="M1466.0 1216.0L1606.0 1216.0" stroke="#57524f" stroke-width="1.95" fill="none"/>
<path d="M1451.0 1225.0L1620.0 1225.0" stroke="#57524f" stroke-width="1.95" fill="none"/>
<path d="M1466.0 1224.5 L1477.0 1216.5 L1488.0 1224.5 L1499.0 1216.5 L1510.0 1224.5 L1521.0 1216.5 L1532.0 1224.5 L1543.0 1216.5 L1554.0 1224.5 L1565.0 1216.5 L1576.0 1224.5 L1587.0 1216.5 L1598.0 1224.5 L1606.0 1216.5 L1606.0 1224.5" stroke="#57524f" stroke-width="1.52" fill="none" opacity="0.85"/>
<path d="M1466.0 1224.5 L1466.0 1216.5 L1477.0 1224.5 L1488.0 1216.5 L1499.0 1224.5 L1510.0 1216.5 L1521.0 1224.5 L1532.0 1216.5 L1543.0 1224.5 L1554.0 1216.5 L1565.0 1224.5 L1576.0 1216.5 L1587.0 1224.5 L1598.0 1216.5 L1606.0 1224.5 L1606.0 1216.5" stroke="#57524f" stroke-width="1.52" fill="none" opacity="0.85"/>
<rect x="1448.0" y="1046.0" width="18.0" height="24.0" fill="#d5cfca" opacity="0.7" />
<rect x="1610.0" y="993.0" width="131.0" height="8.0" fill="#dce1d8" />
<rect x="1610.0" y="993.0" width="10.0" height="59.0" fill="#dce1d8" />
<path d="M1610.0 993.0L1741.0 993.0" stroke="#57524f" stroke-width="1.71" fill="none" opacity="0.6"/>
<path d="M1619.5 1001.0L1741.0 1001.0" stroke="#57524f" stroke-width="2.2" fill="none"/>
<path d="M1619.5 1001.0L1619.5 1052.0" stroke="#57524f" stroke-width="2.2" fill="none"/>
<path d="M1610.0 993.0L1610.0 1052.0" stroke="#57524f" stroke-width="1.71" fill="none" opacity="0.6"/>
<path d="M1741.0 1001.0L1741.0 1226.0" stroke="#57524f" stroke-width="2.2" fill="none"/>
<path d="M1749.7 1069.0L1749.7 1100.0" stroke="#57524f" stroke-width="1.71" fill="none"/>
<rect x="1751.6" y="1069.7" width="11.4" height="27.8" fill="#dce1d8" />
<path d="M1620.0 1180.5L1741.0 1180.5" stroke="#57524f" stroke-width="1.95" fill="none"/>
<path d="M1620.0 1190.0L1741.0 1190.0" stroke="#57524f" stroke-width="1.95" fill="none"/>
<path d="M1622.0 1192.0L1741.0 1226.0" stroke="#57524f" stroke-width="1.59" fill="none" opacity="0.7"/>
<rect x="1745.0" y="1124.0" width="21.0" height="109.0" fill="#e9e3e0" opacity="0.85" />
<path d="M1741.0 1097.5L1765.0 1097.5" stroke="#57524f" stroke-width="1.95" fill="none"/>
<path d="M1758.3 1100.0L1758.3 1245.0" stroke="#57524f" stroke-width="1.95" fill="none"/>
<path d="M1764.4 1028.0L1764.4 1182.4" stroke="#57524f" stroke-width="2.2" fill="none"/>
<path d="M1448.0 823.0L1448.0 880.0" stroke="#57524f" stroke-width="2.2" fill="none"/>
<path d="M1447.0 880.0L1528.0 880.0" stroke="#57524f" stroke-width="2.2" fill="none"/>
<path d="M1448.0 851.0L1528.0 851.0" stroke="#57524f" stroke-width="1.59" fill="none" stroke-dasharray="26 5 3 5" opacity="0.8"/>
<rect x="1525.5" y="824.0" width="6.0" height="56.0" fill="#57524f" opacity="0.75" />
<path d="M1531.0 880.0L1630.0 880.0" stroke="#57524f" stroke-width="2.68" fill="none" stroke-dasharray="9 5" opacity="0.8"/>
<path d="M1582.0 826.0L1582.0 880.0" stroke="#57524f" stroke-width="2.44" fill="none" stroke-dasharray="9 5" opacity="0.8"/>
<path d="M1582.0 851.0L1715.0 851.0" stroke="#57524f" stroke-width="1.59" fill="none" stroke-dasharray="26 5 3 5" opacity="0.8"/>
<path d="M1694.0 880.0L1741.0 880.0" stroke="#57524f" stroke-width="2.2" fill="none"/>
<path d="M1715 824.5V880M1722 824.5V880M1722 826L1741 880M1715 824.5H1741" stroke="#57524f" stroke-width="1.95" fill="none"/>
<rect x="1706.6" y="804.0" width="45.9" height="25.0" fill="#cfc9c5" opacity="0.45" />
<rect x="1733.0" y="829.0" width="37.0" height="39.5" fill="#cfc9c5" opacity="0.45" />
<rect x="1706.6" y="870.0" width="38.4" height="17.0" fill="#cfc9c5" opacity="0.4" />
<path d="M1447.4 987.0L1745.0 987.0" stroke="#57524f" stroke-width="2.2" fill="none" opacity="0.85"/>
<path d="M1447.0 1036.0L1610.0 1036.0" stroke="#57524f" stroke-width="1.83" fill="none" opacity="0.8"/>
<path d="M1448.5 987.0L1448.5 1042.0" stroke="#57524f" stroke-width="2.07" fill="none" opacity="0.85"/>
<path d="M1453.5 987.0L1453.5 1042.0" stroke="#57524f" stroke-width="2.07" fill="none" opacity="0.85"/>
<path d="M1504.8 987.0L1504.8 1042.0" stroke="#57524f" stroke-width="2.07" fill="none" opacity="0.85"/>
<path d="M1552.0 987.0L1552.0 1042.0" stroke="#57524f" stroke-width="2.07" fill="none" opacity="0.85"/>
<path d="M1557.0 987.0L1557.0 1042.0" stroke="#57524f" stroke-width="2.07" fill="none" opacity="0.85"/>
<path d="M1610.0 987.0L1610.0 1042.0" stroke="#57524f" stroke-width="2.07" fill="none" opacity="0.85"/>
<path d="M1557 1015H1576V1036" stroke="#57524f" stroke-width="1.95" fill="none"/>
<rect x="1606.0" y="987.0" width="14.0" height="55.0" fill="#dce1d8" opacity="0.9" />
<path d="M1780.0 500.0L1780.0 617.0" stroke="#57524f" stroke-width="1.59" fill="none" stroke-dasharray="24 5 3 5" opacity="0.8"/>
<rect x="1810.0" y="523.4" width="81.0" height="69.2" fill="none" stroke="#57524f" stroke-width="2.07" />
<path d="M1754 471.5H1781V497.5H1754M1756 474L1780 497" stroke="#57524f" stroke-width="1.83" fill="none"/>
<polygon points="1766.0,506.0 1775.0,525.0 1757.0,525.0" fill="#6d6647"/>
<path d="M1897.8 1116.5L1897.8 1245.0" stroke="#57524f" stroke-width="2.32" fill="none" opacity="0.85"/>
<path d="M1902.6 1116.5L1902.6 1245.0" stroke="#57524f" stroke-width="2.32" fill="none" opacity="0.85"/>
<path d="M2074.0 1124.0L2074.0 1245.0" stroke="#57524f" stroke-width="2.32" fill="none" opacity="0.85"/>
<path d="M1922.7 1124.0L1922.7 1229.0" stroke="#57524f" stroke-width="2.32" fill="none" opacity="0.85"/>
<path d="M1947.6 1124.0L1947.6 1229.0" stroke="#57524f" stroke-width="2.32" fill="none" opacity="0.85"/>
<path d="M1971.5 1124.0L1971.5 1229.0" stroke="#57524f" stroke-width="2.32" fill="none" opacity="0.85"/>
<path d="M1996.3 1124.0L1996.3 1229.0" stroke="#57524f" stroke-width="2.32" fill="none" opacity="0.85"/>
<path d="M2020.0 1124.0L2020.0 1229.0" stroke="#57524f" stroke-width="2.32" fill="none" opacity="0.85"/>
<path d="M2045.0 1124.0L2045.0 1229.0" stroke="#57524f" stroke-width="2.32" fill="none" opacity="0.85"/>
<path d="M1896.0 1124.0L2076.0 1124.0" stroke="#57524f" stroke-width="2.32" fill="none" opacity="0.85"/>
<path d="M1896.0 1226.5L2076.0 1226.5" stroke="#57524f" stroke-width="2.32" fill="none" opacity="0.85"/>
<path d="M1896.0 1231.5L2076.0 1231.5" stroke="#57524f" stroke-width="2.32" fill="none" opacity="0.85"/>
<path d="M1896.0 1240.0L2076.0 1240.0" stroke="#57524f" stroke-width="2.32" fill="none" opacity="0.85"/>
<path d="M1896.0 1173.8L2048.0 1173.8" stroke="#57524f" stroke-width="1.95" fill="none" opacity="0.75"/>
<path d="M2046 1152L2072 1175L2046 1197" stroke="#57524f" stroke-width="2.44" fill="none"/>
<path d="M2090 1156L2102 1166" stroke="#57524f" stroke-width="1.22" fill="none" opacity="0.5"/>
<path d="M2185.8 1128.0L2185.8 1245.0" stroke="#57524f" stroke-width="1.95" fill="none" opacity="0.8"/>
<path d="M2204.5 1128.0L2204.5 1245.0" stroke="#57524f" stroke-width="1.95" fill="none" opacity="0.8"/>
<path d="M2183.0 1144.8L2205.0 1144.8" stroke="#57524f" stroke-width="1.95" fill="none" opacity="0.8"/>
<path d="M2290.0 1127.7L2424.0 1127.7" stroke="#57524f" stroke-width="2.2" fill="none" opacity="0.85"/>
<path d="M2403.3 1128.0L2403.3 1245.0" stroke="#57524f" stroke-width="1.83" fill="none" opacity="0.8"/>
<path d="M2416.7 1128.0L2416.7 1245.0" stroke="#57524f" stroke-width="1.83" fill="none" opacity="0.8"/>
<rect x="1754.0" y="471.0" width="148.0" height="52.4" fill="#f1e2c0" opacity="1" />
<rect x="1810.0" y="471.0" width="80.0" height="62.0" fill="#f7dcaa" opacity="1" />
<rect x="1753.5" y="471.4" width="27.5" height="26.2" fill="#efd9bb" opacity="1" />
<path d="M1754 471.5H1781V497.5H1754M1756 474L1780 497" stroke="#8d7a5a" stroke-width="1.5" fill="none"/>
<polygon points="1766.0,506.0 1775.0,525.0 1757.0,525.0" fill="#6d6647"/>
<path d="M1810 472V523.4H1902M1890 472V523" stroke="#b9924a" stroke-width="1.7" fill="none"/>
<rect x="1810.0" y="599.0" width="81.0" height="18.0" fill="#ede5c4" opacity="1" />
<path d="M1810.0 617.0L1891.0 617.0" stroke="#b9924a" stroke-width="1.6" fill="none"/>
<path d="M1810.0 593.0L1810.0 617.0" stroke="#57524f" stroke-width="1.83" fill="none"/>
<rect x="1758.6" y="627.0" width="131.4" height="54.0" fill="#ede5c4" opacity="1" />
<path d="M1758.6 627H1890V681H1758.6M1809 627V681" stroke="#b9924a" stroke-width="1.6" fill="none"/>
<path d="M1758.0 652.4L1890.0 652.4" stroke="#57524f" stroke-width="1.71" fill="none" stroke-dasharray="26 6 3 6" opacity="0.75"/>
<rect x="1539.0" y="824.5" width="39.0" height="56.0" fill="#ede5c4" stroke="#e3b877" stroke-width="1" opacity="1" />
<path d="M1528 826L1577 879" stroke="#7c7252" stroke-width="1.5" fill="none"/>
<polygon points="1553.0,826.0 1562.0,848.0 1544.0,848.0" fill="#7c7252"/>
<rect x="1629.0" y="830.0" width="65.8" height="52.4" fill="#ede5c4" stroke="#f0cf9a" stroke-width="1" opacity="1" />
<rect x="1633.0" y="836.0" width="27.0" height="41.0" fill="none" stroke="#8f8668" stroke-width="1.8" rx="7" />
<rect x="1663.0" y="836.0" width="27.0" height="41.0" fill="none" stroke="#8f8668" stroke-width="1.8" rx="7" />
<rect x="1456.0" y="987.0" width="48.4" height="59.4" fill="#ede5c4" stroke="#eac48c" stroke-width="1" opacity="1" />
<path d="M1456 995L1503 1043M1460 1012L1476 1000M1478 1018L1498 1005M1460 1020H1474V1030M1480 1020H1498" stroke="#7c7252" stroke-width="1.5" fill="none"/>
<rect x="1200.4" y="1059.0" width="49.6" height="51.8" fill="#ede5c4" opacity="1" />
<rect x="1200.4" y="1059.5" width="49.6" height="51.0" fill="none" stroke="#a08444" stroke-width="2" rx="5" stroke-dasharray="9 4"/>
<path d="M1206 1064L1247 1106M1218 1071H1240M1228 1071V1085M1222 1082H1236L1240 1092M1218 1108V1092Q1225 1086 1232 1092V1108" stroke="#7c7252" stroke-width="1.5" fill="none"/>
<rect x="1199.8" y="1165.0" width="55.4" height="59.5" fill="#ead9b4" opacity="1" />
<rect x="1207.0" y="1165.0" width="37.0" height="59.0" fill="#f7dcaa" opacity="0.8" />
<path d="M1199.8 1226V1161.4H1255M1253 1161.4V1226" stroke="#57524f" stroke-width="2.44" fill="none"/>
<rect x="1260.4" y="1173.5" width="62.3" height="45.3" fill="#eddcb4" opacity="1" />
<rect x="1269.6" y="1180.5" width="51.4" height="39.2" fill="#f7dcaa" opacity="1" />
<rect x="1269.6" y="1180.5" width="51.4" height="39.2" fill="none" stroke="#8d7a4a" stroke-width="1.7" rx="5" />
<path d="M1296 1196V1224M1285 1203H1308M1281 1213H1310" stroke="#8d7a4a" stroke-width="1.7" fill="none"/>
<rect x="1471.3" y="1160.5" width="39.2" height="53.5" fill="#ede5c4" opacity="1" />
<rect x="1477.0" y="1165.0" width="24.0" height="47.0" fill="#f3dba8" opacity="1" />
<rect x="1471.3" y="1160.5" width="29.7" height="45.8" fill="none" stroke="#8d7a4a" stroke-width="1.6" />
<path d="M1478 1172L1498 1203M1482 1170L1500 1198" stroke="#8d7a4a" stroke-width="1.4" fill="none"/>
<rect x="1513.4" y="1069.0" width="34.6" height="157.0" fill="#f0dfb0" opacity="1" />
<rect x="1521.0" y="1069.0" width="25.0" height="149.0" fill="#f7dcaa" opacity="1" />
<rect x="1550.7" y="1080.0" width="55.3" height="133.0" fill="#eee3bc" opacity="1" />
<path d="M1513.4 1069V1226M1521 1069V1226M1546 1069V1226M1550.5 1069V1218" stroke="#a9894a" stroke-width="1.5" fill="none"/>
<path d="M1521 1082H1546M1521 1094H1546M1521 1106H1546M1521 1118H1546M1521 1130H1546M1521 1142H1546M1521 1154H1546M1521 1166H1546M1521 1178H1546M1521 1190H1546M1521 1202H1546M1521 1214H1546" stroke="#a58a52" stroke-width="1.5" fill="none"/>
<path d="M1551 1082H1605M1551 1094H1605M1551 1106H1605M1551 1118H1605M1551 1130H1605M1551 1142H1605M1551 1154H1605M1551 1166H1605M1551 1178H1605M1551 1190H1605M1551 1202H1605" stroke="#b3a77c" stroke-width="1.5" fill="none" opacity="0.9"/>
<polygon points="1590.0,1188.0 1604.0,1197.0 1590.0,1206.0" fill="#6d6647"/>
<rect x="1623.0" y="1035.0" width="35.0" height="42.8" fill="#fbe3c6" opacity="1" />
<rect x="1623.0" y="1026.7" width="41.6" height="51.1" fill="none" stroke="#8a8480" stroke-width="1.6" rx="5" />
<path d="M1631 1040V1064M1636 1042V1060M1626 1052H1646" stroke="#9a7a4a" stroke-width="1.5" fill="none"/>
<rect x="1677.6" y="1122.0" width="51.4" height="46.0" fill="#fbe3c6" opacity="1" />
<rect x="1687.0" y="1110.4" width="38.0" height="70.1" fill="#fbe0bd" opacity="1" />
<rect x="1680.0" y="1112.6" width="43.5" height="65.1" fill="none" stroke="#9a8a70" stroke-width="1.5" rx="9" />
<circle cx="1701.0" cy="1132.7" r="15.0" stroke="#9a8a70" stroke-width="1.5" fill="none"/>
<polygon points="1626.0,1157.0 1646.0,1157.0 1636.0,1180.5" fill="#4a4a4a"/>
<rect x="1904.5" y="931.0" width="54.5" height="46.0" fill="#ede5c4" stroke="#e8c48a" stroke-width="1" opacity="1" />
<rect x="1904.5" y="987.5" width="54.5" height="52.5" fill="#ede5c4" stroke="#e8c48a" stroke-width="1" opacity="1" />
<rect x="1904.5" y="1045.8" width="54.5" height="45.9" fill="#ede5c4" stroke="#e8c48a" stroke-width="1" opacity="1" />
<path d="M1902 929H1960V1094M1902 983H1960M1902 1042H1960M1902 1094H1960M1904 929V1094" stroke="#57524f" stroke-width="2.44" fill="none" opacity="0.75"/>
<path d="M1931.0 1046.0L1931.0 1092.0" stroke="#57524f" stroke-width="1.71" fill="none" stroke-dasharray="14 5 3 5" opacity="0.8"/>
<path d="M1320 1172V1158H1449V1222H1320" stroke="#57524f" stroke-width="2.68" fill="none" stroke-dasharray="16 9" opacity="0.8"/>
<rect x="1371.7" y="1137.5" width="6.0" height="91.5" fill="#57524f" opacity="0.8" />
<path d="M1372.0 1138.0L1394.0 1138.0" stroke="#57524f" stroke-width="2.44" fill="none" opacity="0.8"/>
<path d="M1436.0 1138.0L1451.0 1138.0" stroke="#57524f" stroke-width="1.83" fill="none" stroke-dasharray="8 5" opacity="0.8"/>
<circle cx="1415.0" cy="1139.4" r="9.0" stroke="#57524f" stroke-width="2.07" fill="none"/>
<path d="M1404 1128L1426 1151M1426 1128L1404 1151" stroke="#57524f" stroke-width="1.95" fill="none"/>
<circle cx="1416.4" cy="1182.0" r="5.5" stroke="#57524f" stroke-width="2.07" fill="none"/>
<path d="M1416.4 1188.0L1416.4 1215.0" stroke="#57524f" stroke-width="2.44" fill="none"/>
<path d="M1408.0 1215.0L1430.0 1215.0" stroke="#57524f" stroke-width="2.68" fill="none"/>
<path d="M1411.0 1221.0L1427.0 1221.0" stroke="#57524f" stroke-width="3.05" fill="none"/>
<rect x="1596.7" y="425.0" width="61.8" height="44.0" fill="#c6d8ec" opacity="1" />
<path d="M1596.7 424V472M1656.5 424V470" stroke="#56657a" stroke-width="2" fill="none"/>
<path d="M1597 441.5H1658M1597 456.5H1658M1605 438V456M1648 441V457" stroke="#6b7d94" stroke-width="1.5" fill="none"/>
<rect x="1164.0" y="471.0" width="12.5" height="311.5" fill="#c3d9ef" opacity="0.92" />
<path d="M1164.3 471V782M1176.3 471V782" stroke="#7a9cc4" stroke-width="1.7" fill="none"/>
<rect x="1334.6" y="490.0" width="28.4" height="40.0" fill="#b0cbea" opacity="0.92" />
<rect x="1334.6" y="490.0" width="28.4" height="40.0" fill="none" stroke="#6d96c6" stroke-width="1.3" />
<rect x="1334.6" y="538.0" width="28.4" height="147.0" fill="#bfd4eb" opacity="0.92" />
<path d="M1335 538V685M1363 538V685M1349 538V685M1356 538V685" stroke="#6c90b8" stroke-width="1.5" fill="none"/>
<rect x="1334.6" y="709.0" width="28.4" height="79.0" fill="#bfd4eb" opacity="0.92" />
<path d="M1335 709V788M1363 709V788M1349 709V788M1356 709V788" stroke="#6c90b8" stroke-width="1.5" fill="none"/>
<rect x="1198.0" y="793.0" width="83.0" height="30.5" fill="#b3d0ee" opacity="0.92" />
<path d="M1198 800H1281M1198 808H1281" stroke="#6c90b8" stroke-width="1.6" fill="none"/>
<path d="M1203 793V808M1275 793V808M1281 793V823" stroke="#5d84b3" stroke-width="2.5" fill="none"/>
<rect x="1154.5" y="831.0" width="31.0" height="150.4" fill="#bfd4eb" opacity="0.92" />
<path d="M1163.5 831V981M1175.5 831V981" stroke="#7d93ad" stroke-width="1.7" fill="none"/>
<rect x="1186.0" y="940.0" width="8.0" height="41.0" fill="#dfe5e6" />
<path d="M1176 940H1194M1176 952H1194" stroke="#7d93ad" stroke-width="1.5" fill="none"/>
<rect x="1160.0" y="1060.0" width="36.5" height="72.4" fill="#c8d8ea" opacity="0.92" />
<path d="M1163.5 1060V1132M1175.5 1060V1132M1194.6 1060V1132M1176 1124H1196M1176 1130H1196" stroke="#7d93ad" stroke-width="1.6" fill="none"/>
<rect x="1292.0" y="1044.0" width="69.0" height="15.0" fill="#b9d3ee" opacity="0.92" />
<path d="M1292 1046H1361M1292 1056H1361" stroke="#7d93ad" stroke-width="1.5" fill="none"/>
<path d="M1355.6 1040V1058M1361 1040V1058" stroke="#57524f" stroke-width="2.2" fill="none"/>
<rect x="1451.0" y="1071.6" width="14.0" height="55.4" fill="#b7d4f0" opacity="1" />
<rect x="1891.0" y="529.0" width="9.7" height="62.3" fill="#bfd4eb" opacity="0.92" />
<rect x="1891.0" y="529.0" width="9.7" height="62.3" fill="none" stroke="#5d84b3" stroke-width="1.6" />
<rect x="1889.0" y="731.4" width="13.6" height="74.6" fill="#bfd4eb" opacity="0.92" />
<rect x="1889.0" y="731.4" width="13.6" height="74.6" fill="none" stroke="#6d94c3" stroke-width="1.4" />
<rect x="1889.0" y="833.0" width="13.6" height="77.0" fill="#bfd4eb" opacity="0.92" />
<rect x="1889.0" y="833.0" width="13.6" height="77.0" fill="none" stroke="#6d94c3" stroke-width="1.4" />
<rect x="1745.8" y="911.4" width="12.2" height="72.3" fill="#bfd6e6" opacity="0.92" />
<path d="M1746 911V984M1758 911V984" stroke="#8fb4dc" stroke-width="1.2" fill="none"/>
<rect x="1681.8" y="993.0" width="55.2" height="10.0" fill="#bcd3e6" opacity="0.92" />
<rect x="1748.3" y="1010.5" width="14.7" height="59.2" fill="#bcd3e6" opacity="0.92" />
<rect x="1748.3" y="1010.5" width="14.7" height="59.2" fill="none" stroke="#a5c6ea" stroke-width="1" />
<rect x="1769.7" y="1103.0" width="77.3" height="18.4" fill="#b3d2ef" opacity="1" />
<path d="M1765.0 1117.0L1847.0 1117.0" stroke="#8aa5c2" stroke-width="1.5" fill="none"/>
<rect x="2255.5" y="562.6" width="34.5" height="142.4" fill="#c3d6eb" opacity="0.92" />
<path d="M2259 563V705M2266 563V705M2280 563V705M2259 575H2282M2259 698H2280" stroke="#7088a3" stroke-width="1.5" fill="none"/>
<rect x="2266.0" y="859.0" width="33.5" height="168.0" fill="#c6d8ec" opacity="0.92" />
<path d="M2259 859V1027M2277.5 859V1027M2290.5 859V1027M2262 1016H2280" stroke="#7d93ad" stroke-width="1.5" fill="none"/>
<rect x="2258.5" y="859.0" width="7.5" height="168.0" fill="#dce1d8" />
<path d="M2258.5 859.0L2258.5 1027.0" stroke="#57524f" stroke-width="1.95" fill="none"/>
<path d="M1271.5 786.0A76.5 76.5 0 0 1 1424.5 786.0" stroke="#57524f" stroke-width="1.52" fill="none" opacity="0.8"/>
<path d="M1271.0 786.0L1428.0 786.0" stroke="#57524f" stroke-width="2.44" fill="none"/>
<path d="M1424.4 778.0L1424.4 792.0" stroke="#57524f" stroke-width="1.83" fill="none"/>
<path d="M1363 500H1390M1390 500Q1390 526 1363 530" stroke="#57524f" stroke-width="1.71" fill="none" opacity="0.8"/>
<path d="M1901 528H1961M1961 528Q1958 580 1901 591" stroke="#57524f" stroke-width="1.95" fill="none" opacity="0.85"/>
<path d="M1902 731A70 76 0 0 1 1972 807" stroke="#57524f" stroke-width="1.52" fill="none" opacity="0.8"/>
<path d="M1902.0 807.0L1972.0 807.0" stroke="#57524f" stroke-width="2.44" fill="none" opacity="0.8"/>
<path d="M1972 833A70 77 0 0 1 1902 910" stroke="#57524f" stroke-width="1.52" fill="none" opacity="0.8"/>
<path d="M1902.0 833.0L1972.0 833.0" stroke="#57524f" stroke-width="1.95" fill="none" opacity="0.8"/>
<path d="M2236.0 740.0A22.0 22.0 0 0 1 2258.0 718.0" stroke="#57524f" stroke-width="1.52" fill="none" opacity="0.8"/>
<path d="M2236.0 740.0L2258.0 740.0" stroke="#57524f" stroke-width="2.2" fill="none"/>
<path d="M2236.0 863.0A22.0 22.0 0 0 0 2258.0 885.0" stroke="#57524f" stroke-width="1.52" fill="none" opacity="0.8"/>
<path d="M2236.0 863.0L2258.0 863.0" stroke="#57524f" stroke-width="1.95" fill="none"/>
<path d="M1293.6 1042.0A62.0 62.0 0 0 1 1355.6 980.0" stroke="#57524f" stroke-width="1.52" fill="none" opacity="0.8"/>
<path d="M1355.6 981.0L1355.6 1042.0" stroke="#57524f" stroke-width="2.68" fill="none"/>
<path d="M1340.0 981.5L1357.0 981.5" stroke="#57524f" stroke-width="2.2" fill="none"/>
<path d="M1351 1010V1040H1336" stroke="#fff" stroke-width="2.5" fill="none" opacity="0.9"/>
<path d="M1194.0 956.0A22.0 22.0 0 0 1 1216.0 978.0" stroke="#57524f" stroke-width="1.52" fill="none" opacity="0.8"/>
<path d="M1194.0 978.0L1216.0 978.0" stroke="#57524f" stroke-width="2.2" fill="none"/>
<path d="M1176.0 946.0L1196.0 946.0" stroke="#57524f" stroke-width="1.83" fill="none"/>
<path d="M1196.0 1135.0A20.0 20.0 0 0 1 1216.0 1155.0" stroke="#57524f" stroke-width="1.52" fill="none" opacity="0.8"/>
<path d="M1196.0 1155.0L1218.0 1155.0" stroke="#57524f" stroke-width="2.2" fill="none"/>
<path d="M1398.0 1069.0L1451.0 1069.0" stroke="#57524f" stroke-width="2.2" fill="none"/>
<path d="M1400 1069Q1402 1120 1451 1127" stroke="#57524f" stroke-width="1.83" fill="none" opacity="0.85"/>
<path d="M1673 985A68 73 0 0 1 1741 912" stroke="#57524f" stroke-width="1.52" fill="none" opacity="0.8"/>
<path d="M1673.0 985.0L1741.0 985.0" stroke="#57524f" stroke-width="3.17" fill="none" opacity="0.8"/>
<path d="M1678 1003Q1684 1060 1741 1070.7" stroke="#57524f" stroke-width="1.71" fill="none" opacity="0.85"/>
<path d="M1764.4 1027.0A73.0 73.0 0 0 1 1837.4 1100.0" stroke="#57524f" stroke-width="1.52" fill="none" opacity="0.8"/>
<path d="M1764.4 1028.0L1770.0 1028.0" stroke="#57524f" stroke-width="1.83" fill="none"/>
<path d="M1847.0 1097.0L1847.0 1121.0" stroke="#57524f" stroke-width="1.95" fill="none"/>
<path d="M1764 1182Q1790 1184 1810 1168" stroke="#57524f" stroke-width="1.71" fill="none" opacity="0.85"/>
<path d="M1820 1142L1808 1158" stroke="#57524f" stroke-width="1.71" fill="none" opacity="0.85"/>
<text transform="translate(1205.0 399.5) rotate(180) scale(0.949 1)" text-anchor="middle" dominant-baseline="central" font-size="33.6" fill="#605e5c" stroke="#605e5c" stroke-width="0.5">1800</text>
<text transform="translate(1379.5 399.5) rotate(180) scale(0.910 1)" text-anchor="middle" dominant-baseline="central" font-size="33.6" fill="#605e5c" stroke="#605e5c" stroke-width="0.5">10300</text>
<text transform="translate(1286.8 476.4) rotate(-90) scale(0.991 1)" text-anchor="middle" dominant-baseline="central" font-size="32.2" fill="#605e5c" stroke="#605e5c" stroke-width="0.5">3900</text>
<text transform="translate(1206.5 700.5) rotate(-90) scale(1.076 1)" text-anchor="middle" dominant-baseline="central" font-size="30.9" fill="#605e5c" stroke="#605e5c" stroke-width="0.5">PARVEKE</text>
<text transform="translate(1407.2 750.5) rotate(-90) scale(1.000 1)" text-anchor="middle" dominant-baseline="central" font-size="30.9" fill="#605e5c" stroke="#605e5c" stroke-width="0.5">OH</text>
<text transform="translate(1481.0 759.5) rotate(-90) scale(0.930 1)" text-anchor="middle" dominant-baseline="central" font-size="32.9" fill="#605e5c" stroke="#605e5c" stroke-width="0.5">36</text>
<text transform="translate(1859.5 559.2) rotate(-90) scale(1.025 1)" text-anchor="middle" dominant-baseline="central" font-size="30.9" fill="#605e5c" stroke="#605e5c" stroke-width="0.5">VH</text>
<text transform="translate(2321.0 485.7) rotate(-90) scale(0.931 1)" text-anchor="middle" dominant-baseline="central" font-size="34.2" fill="#605e5c" stroke="#605e5c" stroke-width="0.5">7500</text>
<text transform="translate(2209.0 767.0) rotate(-90) scale(1.105 1)" text-anchor="middle" dominant-baseline="central" font-size="30.2" fill="#605e5c" stroke="#605e5c" stroke-width="0.5">MH</text>
<text transform="translate(2208.5 1048.7) rotate(-90) scale(1.145 1)" text-anchor="middle" dominant-baseline="central" font-size="30.2" fill="#605e5c" stroke="#605e5c" stroke-width="0.5">MH</text>
<text transform="translate(1819.0 859.2) rotate(-90) scale(0.871 1)" text-anchor="middle" dominant-baseline="central" font-size="32.2" fill="#605e5c" stroke="#605e5c" stroke-width="0.5">3H+K+SA/76,5</text>
<text transform="translate(1486.5 958.0) rotate(-90) scale(1.000 1)" text-anchor="middle" dominant-baseline="central" font-size="30.9" fill="#605e5c" stroke="#605e5c" stroke-width="0.5">K</text>
<text transform="translate(1228.5 1013.8) rotate(-90) scale(1.000 1)" text-anchor="middle" dominant-baseline="central" font-size="30.9" fill="#605e5c" stroke="#605e5c" stroke-width="0.5">R</text>
<text transform="translate(1486.5 1101.2) rotate(-90) scale(1.038 1)" text-anchor="middle" dominant-baseline="central" font-size="30.9" fill="#605e5c" stroke="#605e5c" stroke-width="0.5">SA</text>
<text transform="translate(1708.5 1050.0) rotate(-88) scale(0.920 1)" text-anchor="middle" dominant-baseline="central" font-size="31.5" fill="#605e5c" stroke="#605e5c" stroke-width="0.5">WC</text>
<text transform="translate(1788.0 1052.8) rotate(-90) scale(0.991 1)" text-anchor="middle" dominant-baseline="central" font-size="30.9" fill="#605e5c" stroke="#605e5c" stroke-width="0.5">ET</text>
<text transform="translate(1811.0 1131.0) rotate(180) scale(1.132 1)" text-anchor="middle" dominant-baseline="central" font-size="23.5" fill="#605e5c" stroke="#605e5c" stroke-width="0.9">PO-B15</text>
<text transform="translate(1822.0 1163.0) rotate(-90) scale(1.000 1)" text-anchor="middle" dominant-baseline="central" font-size="31.5" fill="#605e5c" stroke="#605e5c" stroke-width="0.5">F</text>
<text transform="translate(1823.8 1225.2) rotate(-90) scale(1.105 1)" text-anchor="middle" dominant-baseline="central" font-size="32.2" fill="#605e5c" stroke="#605e5c" stroke-width="0.5">RAS</text>
<text transform="translate(2256.6 1164.8) rotate(180) scale(0.888 1)" text-anchor="middle" dominant-baseline="central" font-size="33.6" fill="#605e5c" stroke="#605e5c" stroke-width="0.5">1000</text>
<text transform="translate(2233.0 1225.5) rotate(-90) scale(0.919 1)" text-anchor="middle" dominant-baseline="central" font-size="34.9" fill="#605e5c" stroke="#605e5c" stroke-width="0.5">200</text>
<text transform="translate(1133.0 845.0) rotate(-90) scale(0.904 1)" text-anchor="middle" dominant-baseline="central" font-size="34.9" fill="#605e5c" stroke="#605e5c" stroke-width="0.5">7300</text>
</g>
</svg>
<div class="b" style="left:1350px;top:85.5px;width:23px;height:864px;background:#fcfcfc"></div>
<div class="b" style="left:0;top:949.5px;width:1373px;height:27px;background:#fcfcfc"></div>
<div class="b" style="left:1351px;top:117.5px;width:16.5px;height:735px;border-radius:8.5px;background:#8c8c8c"></div>
<div class="b" style="left:32.5px;top:954.8px;width:1232.5px;height:15.8px;border-radius:8px;background:#8c8c8c"></div>
<svg class="abs" style="left:0;top:0" width="1373" height="976" viewBox="1132 295.5 1373 976"><g fill="#8c8c8c" stroke="#8c8c8c" stroke-width="2.5" stroke-linejoin="round"><path d="M2485 399.5L2491.3 390.5L2497.5 399.5Z"/><path d="M2485 1226.5L2491.3 1235.5L2497.5 1226.5Z"/><path d="M1150.5 1252L1141.5 1258.2L1150.5 1264.5Z"/><path d="M2459.5 1252L2468.5 1258.2L2459.5 1264.5Z"/></g></svg>
</section>
<svg class="ic" style="left:1174px;top:323.7px" width="28" height="28" viewBox="0 0 24 24" fill="none" stroke="#334155" stroke-width="2" stroke-linecap="round" stroke-linejoin="round" ><circle cx="11" cy="11" r="8"/><line x1="21" x2="16.65" y1="21" y2="16.65"/><line x1="8" x2="14" y1="11" y2="11"/></svg>
<svg class="ic" style="left:1328px;top:323.7px" width="28" height="28" viewBox="0 0 24 24" fill="none" stroke="#334155" stroke-width="2" stroke-linecap="round" stroke-linejoin="round" ><circle cx="11" cy="11" r="8"/><line x1="21" x2="16.65" y1="21" y2="16.65"/><line x1="11" x2="11" y1="8" y2="14"/><line x1="8" x2="14" y1="11" y2="11"/></svg>
<svg class="ic" style="left:1390.5px;top:323.9px" width="28" height="28" viewBox="0 0 24 24" fill="none" stroke="#334155" stroke-width="2" stroke-linecap="round" stroke-linejoin="round" ><path d="M3 12a9 9 0 1 0 9-9 9.75 9.75 0 0 0-6.74 2.74L3 8"/><path d="M3 3v5h5"/></svg>
<div class="b" style="left:2239px;top:334px;width:166px;height:8.5px;border-radius:5px;background:#efefef;border:1.2px solid #b8b8b8"></div>
<div class="b" style="left:2239px;top:334px;width:72px;height:8.5px;border-radius:5px;background:#1b5e4b"></div>
<div class="b" style="left:2294px;top:324.5px;width:27.5px;height:27.5px;border-radius:50%;background:#1b5e4b"></div>
<h1 class="t" style='left:489.30px;top:44.03px;font:700 55.6px/1 "Liberation Sans", sans-serif;letter-spacing:-1.450px;color:#d9ab55;'>Plans</h1>
<p class="t" style='left:491.00px;top:115.91px;font:400 24.8px/1 "Liberation Sans", sans-serif;letter-spacing:0.659px;color:#64748b;'>Analysez vos plans d'etage avec Vitruvius.</p>
<p class="t" style='left:554.30px;top:215.56px;font:400 24.5px/1 "Liberation Sans", sans-serif;letter-spacing:0.874px;color:#b45309;'><b style="font-weight:400;-webkit-text-stroke:.4px #b45309">Apercu demo</b> — Abonnez-vous pour analyser vos propres plans.</p>
<span class="t" style='left:2314.00px;top:81.67px;font:400 25.2px/1 "Liberation Sans", sans-serif;letter-spacing:0.700px;color:#334155;-webkit-text-stroke:.3px #334155;'>Nouveau plan</span>
<span class="t" style='left:610.20px;top:328.02px;font:700 18.4px/1 "Liberation Sans", sans-serif;letter-spacing:1.029px;color:#fff;'>LAYERS DETECTES</span>
<span class="t" style='left:609.60px;top:359.84px;font:400 22.4px/1 "Liberation Sans", sans-serif;letter-spacing:0.117px;color:#fff;-webkit-text-stroke:.3px #fff;'>129 elements · 4/4 actifs</span>
<span class="t" style='left:637.50px;top:450.04px;font:400 25px/1 "Liberation Sans", sans-serif;letter-spacing:0.760px;color:#d9ab55;-webkit-text-stroke:.3px #d9ab55;'>Pieces</span>
<span class="t" style='left:986.70px;top:451.38px;font:400 22px/1 "Liberation Sans", sans-serif;letter-spacing:0.000px;color:#1e293b;-webkit-text-stroke:.3px #1e293b;'>7</span>
<span class="t" style='left:637.50px;top:549.04px;font:400 25px/1 "Liberation Sans", sans-serif;letter-spacing:1.500px;color:#d9ab55;-webkit-text-stroke:.3px #d9ab55;'>Murs</span>
<span class="t" style='left:973.00px;top:550.38px;font:400 22px/1 "Liberation Sans", sans-serif;letter-spacing:1.900px;color:#1e293b;-webkit-text-stroke:.3px #1e293b;'>71</span>
<span class="t" style='left:638.50px;top:648.04px;font:400 25px/1 "Liberation Sans", sans-serif;letter-spacing:0.778px;color:#d9ab55;-webkit-text-stroke:.3px #d9ab55;'>Ouvertures</span>
<span class="t" style='left:972.50px;top:649.38px;font:400 22px/1 "Liberation Sans", sans-serif;letter-spacing:2.400px;color:#1e293b;-webkit-text-stroke:.3px #1e293b;'>25</span>
<span class="t" style='left:637.50px;top:747.04px;font:400 25px/1 "Liberation Sans", sans-serif;letter-spacing:0.700px;color:#d9ab55;-webkit-text-stroke:.3px #d9ab55;'>Equipements</span>
<span class="t" style='left:972.50px;top:748.38px;font:400 22px/1 "Liberation Sans", sans-serif;letter-spacing:2.400px;color:#1e293b;-webkit-text-stroke:.3px #1e293b;'>26</span>
<span class="t" style='left:1233.50px;top:327.05px;font:400 21.2px/1 "Liberation Sans", sans-serif;letter-spacing:2.400px;color:#64748b;'>100%</span>
<span class="t" style='left:2057.50px;top:327.19px;font:400 20.8px/1 "Liberation Sans", sans-serif;letter-spacing:0.807px;color:#64748b;'>Opacite overlays</span>
<span class="t" style='left:2420.70px;top:327.19px;font:400 20.8px/1 "Liberation Sans", sans-serif;letter-spacing:2.500px;color:#64748b;-webkit-text-stroke:.3px #64748b;'>40%</span>
</main></body></html>
